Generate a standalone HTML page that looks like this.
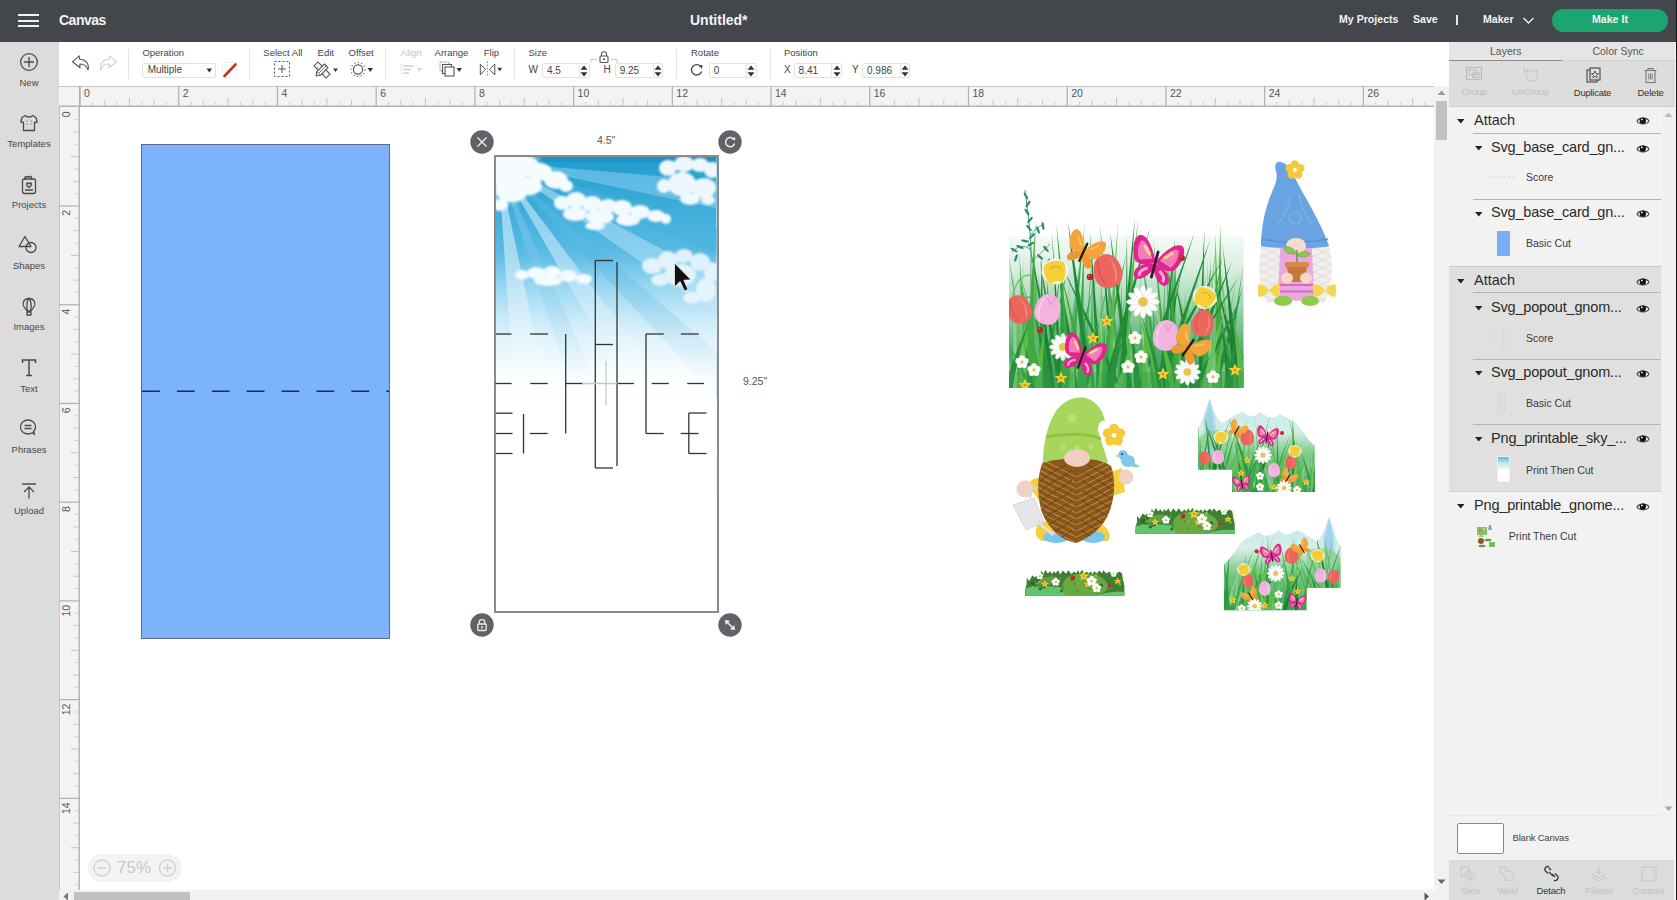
<!DOCTYPE html><html><head><meta charset="utf-8"><style>
*{margin:0;padding:0;box-sizing:border-box}
html,body{width:1677px;height:900px;overflow:hidden;background:#fff;font-family:"Liberation Sans",sans-serif;color:#333}
.a{position:absolute}
.t{position:absolute;white-space:nowrap;line-height:1}
svg text{font-family:"Liberation Sans",sans-serif}
</style></head><body><div class="a" style="left:0;top:0;width:1677px;height:42px;background:#43464b"></div><div class="a" style="left:18px;top:14px;width:21px;height:2px;background:#f2f2f2"></div><div class="a" style="left:18px;top:19.5px;width:21px;height:2px;background:#f2f2f2"></div><div class="a" style="left:18px;top:25px;width:21px;height:2px;background:#f2f2f2"></div><div class="t" style="left:59px;top:12.5px;font-size:14px;color:#f4f4f4;font-weight:bold;letter-spacing:-0.5px">Canvas</div><div class="t" style="left:690px;top:12.5px;font-size:14px;color:#f4f4f4;font-weight:bold">Untitled*</div><div class="t" style="left:1339px;top:14px;font-size:10.6px;color:#f4f4f4;font-weight:bold">My Projects</div><div class="t" style="left:1413px;top:14px;font-size:10.6px;color:#f4f4f4;font-weight:bold">Save</div><div class="a" style="left:1456px;top:15px;width:1.5px;height:10px;background:#e8e8e8"></div><div class="t" style="left:1483px;top:14px;font-size:10.6px;color:#f4f4f4;font-weight:bold">Maker</div><svg class="a" style="left:1522px;top:16px" width="13" height="9"><path d="M1.5 2 L6.5 7 L11.5 2" fill="none" stroke="#eee" stroke-width="1.4"/></svg><div class="a" style="left:1552px;top:9px;width:116px;height:23px;border-radius:12px;background:#1aa571"></div><div class="t" style="left:1592px;top:14px;font-size:10.6px;color:#f4f4f4;font-weight:bold">Make It</div>
<div class="a" style="left:0;top:42px;width:59px;height:858px;background:#dcdcdc"></div><svg class="a" style="left:18.6px;top:52.0px" width="20" height="20"><circle cx="10" cy="10" r="8.3" fill="none" stroke="#4a4a4a" stroke-width="1.3" stroke-linejoin="round" stroke-linecap="round"/><path d="M10 5.5V14.5M5.5 10H14.5" fill="none" stroke="#4a4a4a" stroke-width="1.3" stroke-linejoin="round" stroke-linecap="round"/></svg><div class="t" style="left:0;width:58px;text-align:center;top:78.0px;font-size:9.5px;color:#484848">New</div><svg class="a" style="left:18.5px;top:113.3px" width="20" height="20"><path d="M6.5 2.5 L3 4.5 L1.8 9 L4.5 9.5 L4.5 17.5 L15.5 17.5 L15.5 9.5 L18.2 9 L17 4.5 L13.5 2.5 C12.5 4.5 7.5 4.5 6.5 2.5Z" fill="none" stroke="#4a4a4a" stroke-width="1.3" stroke-linejoin="round" stroke-linecap="round"/><path d="M8 8h.1M12 8h.1M8 11h.1M12 11h.1" stroke="#4a4a4a" stroke-width="1.2" stroke-linecap="round"/></svg><div class="t" style="left:0;width:58px;text-align:center;top:139.1px;font-size:9.5px;color:#484848">Templates</div><svg class="a" style="left:19.0px;top:174.5px" width="20" height="20"><rect x="3.5" y="4" width="13" height="14.5" rx="2" fill="none" stroke="#4a4a4a" stroke-width="1.3" stroke-linejoin="round" stroke-linecap="round"/><path d="M6 4 L6 2 L12 1.5 L13 4" fill="none" stroke="#4a4a4a" stroke-width="1.3" stroke-linejoin="round" stroke-linecap="round"/><path d="M10 12.5 C7 10.5 7 8 8.5 8 C9.3 8 10 8.7 10 8.7 C10 8.7 10.7 8 11.5 8 C13 8 13 10.5 10 12.5Z" fill="none" stroke="#4a4a4a" stroke-width="1.3" stroke-linejoin="round" stroke-linecap="round"/><path d="M6.5 15H13.5" fill="none" stroke="#4a4a4a" stroke-width="1.3" stroke-linejoin="round" stroke-linecap="round"/></svg><div class="t" style="left:0;width:58px;text-align:center;top:200.2px;font-size:9.5px;color:#484848">Projects</div><svg class="a" style="left:17.5px;top:235.0px" width="20" height="20"><path d="M7 1.5 L1 11.5 L13 11.5Z" fill="none" stroke="#4a4a4a" stroke-width="1.3" stroke-linejoin="round" stroke-linecap="round"/><circle cx="13" cy="12.5" r="5" fill="none" stroke="#4a4a4a" stroke-width="1.3" stroke-linejoin="round" stroke-linecap="round"/></svg><div class="t" style="left:0;width:58px;text-align:center;top:261.3px;font-size:9.5px;color:#484848">Shapes</div><svg class="a" style="left:19.0px;top:297.0px" width="20" height="20"><path d="M10 1.5 C4.5 1.5 3.5 6 4.5 9 L8 14 L12 14 L15.5 9 C16.5 6 15.5 1.5 10 1.5Z" fill="none" stroke="#4a4a4a" stroke-width="1.3" stroke-linejoin="round" stroke-linecap="round"/><path d="M10 1.5 C7.5 3.5 7.5 11 8.5 14 M10 1.5 C12.5 3.5 12.5 11 11.5 14" fill="none" stroke="#4a4a4a" stroke-width="1.3" stroke-linejoin="round" stroke-linecap="round"/><rect x="8" y="15" width="4" height="3" fill="none" stroke="#4a4a4a" stroke-width="1.3" stroke-linejoin="round" stroke-linecap="round"/></svg><div class="t" style="left:0;width:58px;text-align:center;top:322.4px;font-size:9.5px;color:#484848">Images</div><svg class="a" style="left:18.6px;top:358.0px" width="20" height="20"><path d="M3.5 5 V2 H16.5 V5 M10 2 V17.5 M7 17.5 H13" fill="none" stroke="#4a4a4a" stroke-width="1.5"/></svg><div class="t" style="left:0;width:58px;text-align:center;top:383.5px;font-size:9.5px;color:#484848">Text</div><svg class="a" style="left:18.0px;top:418.3px" width="20" height="20"><path d="M16.5 16.5 L15.5 13.5 C17 12 17.5 10.5 17.5 9 C17.5 4.8 14.2 2 10 2 C5.8 2 2.5 4.8 2.5 9 C2.5 13.2 5.8 16 10 16 C11.8 16 13.3 15.5 14.5 14.8Z" fill="none" stroke="#4a4a4a" stroke-width="1.3" stroke-linejoin="round" stroke-linecap="round"/><path d="M6.5 7.5H13.5M6.5 10.5H13.5" fill="none" stroke="#4a4a4a" stroke-width="1.5"/></svg><div class="t" style="left:0;width:58px;text-align:center;top:444.6px;font-size:9.5px;color:#484848">Phrases</div><svg class="a" style="left:18.6px;top:480.5px" width="20" height="20"><path d="M3.5 3H16.5 M10 6 V17 M5.5 10.5 L10 6 L14.5 10.5" fill="none" stroke="#4a4a4a" stroke-width="1.3" stroke-linejoin="round" stroke-linecap="round"/></svg><div class="t" style="left:0;width:58px;text-align:center;top:505.7px;font-size:9.5px;color:#484848">Upload</div>
<div class="a" style="left:59px;top:42px;width:1390px;height:44px;background:#fff"></div><svg class="a" style="left:70px;top:54px" width="50" height="18"><path d="M2.5 7.8 L9.2 1.8 L9.6 5.2 C15.5 5.3 19.5 9.5 18 15.8 C16.2 11.5 13.5 9.8 9.8 10 L10 13.8 Z" fill="none" stroke="#555" stroke-width="1.1" stroke-linejoin="round"/><path d="M46.5 7.8 L39.8 1.8 L39.4 5.2 C33.5 5.3 29.5 9.5 31 15.8 C32.8 11.5 35.5 9.8 39.2 10 L39 13.8 Z" fill="none" stroke="#d0d0d0" stroke-width="1.1" stroke-linejoin="round"/></svg><div class="a" style="left:128.1px;top:49px;width:1px;height:30px;background:#e4e4e4"></div><div class="a" style="left:248.9px;top:49px;width:1px;height:30px;background:#e4e4e4"></div><div class="a" style="left:384.5px;top:49px;width:1px;height:30px;background:#e4e4e4"></div><div class="a" style="left:513.5px;top:49px;width:1px;height:30px;background:#e4e4e4"></div><div class="a" style="left:676.0px;top:49px;width:1px;height:30px;background:#e4e4e4"></div><div class="a" style="left:770.3px;top:49px;width:1px;height:30px;background:#e4e4e4"></div><div class="t" style="left:142.4px;top:48px;font-size:9.5px;color:#444;">Operation</div><div class="a" style="left:142.4px;top:62.5px;width:73.6px;height:15.2px;border:1px solid #e0e0e0;border-radius:2px"></div><div class="t" style="left:147.7px;top:64.5px;font-size:10px;color:#444;">Multiple</div><svg class="a" style="left:205.5px;top:67.5px" width="7" height="5"><path d="M0.5 0.5H6L3.25 4.5Z" fill="#333"/></svg><div class="a" style="left:221.5px;top:62px;width:15.2px;height:16px;border:1px solid #eee;border-radius:2px"></div><svg class="a" style="left:221.5px;top:62px" width="16" height="16"><path d="M2.5 14 L13.5 2.5" stroke="#b83a22" stroke-width="2.6" stroke-linecap="round"/></svg><div class="t" style="left:263.3px;top:48px;font-size:9.5px;color:#444;">Select All</div><svg class="a" style="left:273px;top:60px" width="18" height="18"><rect x="1.5" y="1.5" width="15" height="15" fill="none" stroke="#555" stroke-width="1" stroke-dasharray="2 2"/><path d="M9 5V13M5 9H13" stroke="#555" stroke-width="1"/></svg><div class="t" style="left:317.6px;top:48px;font-size:9.5px;color:#444;">Edit</div><svg class="a" style="left:313px;top:61px" width="26" height="18"><g transform="rotate(-45 9 9)"><rect x="6.3" y="0.5" width="5.4" height="17" fill="#fff" stroke="#555" stroke-width="1.1"/><path d="M6.3 4H8.5M6.3 7H8M6.3 10H8.5M6.3 13H8" stroke="#555" stroke-width="0.8"/></g><g transform="rotate(45 9 9)"><path d="M6.5 3 H11.5 V14 L9 17.5 L6.5 14Z" fill="#fff" stroke="#555" stroke-width="1.1" stroke-linejoin="round"/><path d="M9 3V14M6.5 14H11.5" stroke="#555" stroke-width="0.8"/></g><path d="M20 7.5H25L22.5 11Z" fill="#333"/></svg><div class="t" style="left:348.6px;top:48px;font-size:9.5px;color:#444;">Offset</div><svg class="a" style="left:350px;top:60px" width="24" height="19"><circle cx="8" cy="9.5" r="4.6" fill="none" stroke="#555" stroke-width="1.1"/><circle cx="8" cy="9.5" r="7" fill="none" stroke="#666" stroke-width="1.2" stroke-dasharray="1.2 2.4"/><path d="M17.5 8H23L20.2 12Z" fill="#333"/></svg><div class="t" style="left:400.6px;top:48px;font-size:9.5px;color:#c4c4c4;">Align</div><svg class="a" style="left:400px;top:61px" width="24" height="17"><path d="M1 3V15" stroke="#d4d4d4" stroke-width="1" stroke-dasharray="1.5 1.5"/><path d="M3 5H14M3 8.5H11M3 12H9" stroke="#cfcfcf" stroke-width="1.4"/><path d="M17 7H22L19.5 10.5Z" fill="#d0d0d0"/></svg><div class="t" style="left:434.6px;top:48px;font-size:9.5px;color:#444;">Arrange</div><svg class="a" style="left:438px;top:60px" width="26" height="19"><rect x="2" y="2" width="9" height="9" fill="none" stroke="#777" stroke-width="0.9" stroke-dasharray="1.3 1.2"/><rect x="4.5" y="4.5" width="9" height="9" fill="#fff" stroke="#555" stroke-width="1.1"/><rect x="7" y="7" width="9" height="9" fill="#fff" stroke="#555" stroke-width="1.1"/><path d="M18.5 8H24L21.2 12Z" fill="#333"/></svg><div class="t" style="left:483.8px;top:48px;font-size:9.5px;color:#444;">Flip</div><svg class="a" style="left:478px;top:60px" width="26" height="19"><path d="M2.3 4.2 L7.6 9.5 L2.3 14.8Z M16.8 4.2 L11.4 9.5 L16.8 14.8Z" fill="none" stroke="#555" stroke-width="1" stroke-linejoin="round"/><path d="M9.4 1.5V17" stroke="#7a8a98" stroke-width="1" stroke-dasharray="1.5 1.6"/><path d="M19.3 7.8H24.2L21.75 11.2Z" fill="#333"/></svg><div class="t" style="left:528.5px;top:48px;font-size:9.5px;color:#444;">Size</div><svg class="a" style="left:589px;top:48px" width="30" height="16"><path d="M2 15V11.5H8 M28 15V11.5H22" fill="none" stroke="#bbb" stroke-width="0.8"/><path d="M12.5 8V6 C12.5 3 17.5 3 17.5 6 V8" fill="none" stroke="#555" stroke-width="1.1"/><rect x="11" y="8" width="8" height="6.5" rx="1" fill="none" stroke="#555" stroke-width="1.1"/><circle cx="15" cy="11.2" r="1" fill="#555"/></svg><div class="t" style="left:528.5px;top:64.5px;font-size:10px;color:#444;">W</div><div class="a" style="left:542px;top:63px;width:48px;height:14.5px;border:1px solid #e2e2e2;border-radius:2px;background:#fff"></div><div class="a" style="left:578.6px;top:63px;width:1px;height:14.5px;background:#e6e6e6"></div><svg class="a" style="left:580.3px;top:65px" width="8" height="12"><path d="M4 0.5 L7.5 4.8 L0.5 4.8Z M4 11.5 L7.5 7.2 L0.5 7.2Z" fill="#333"/></svg><div class="t" style="left:547px;top:65.5px;font-size:10px;color:#444;">4.5</div><div class="t" style="left:603.6px;top:64.5px;font-size:10px;color:#444;">H</div><div class="a" style="left:614.7px;top:63px;width:48.799999999999955px;height:14.5px;border:1px solid #e2e2e2;border-radius:2px;background:#fff"></div><div class="a" style="left:652.8px;top:63px;width:1px;height:14.5px;background:#e6e6e6"></div><svg class="a" style="left:654.1px;top:65px" width="8" height="12"><path d="M4 0.5 L7.5 4.8 L0.5 4.8Z M4 11.5 L7.5 7.2 L0.5 7.2Z" fill="#333"/></svg><div class="t" style="left:619.7px;top:65.5px;font-size:10px;color:#444;">9.25</div><div class="t" style="left:691px;top:48px;font-size:9.5px;color:#444;">Rotate</div><svg class="a" style="left:689px;top:62px" width="16" height="15"><path d="M11.5 4.2 A5.2 5.2 0 1 0 12.6 9.5" fill="none" stroke="#444" stroke-width="1.3"/><path d="M9.5 3.5 L13.5 3 L13 7Z" fill="#444"/></svg><div class="a" style="left:708.8px;top:63px;width:48.0px;height:14.5px;border:1px solid #e2e2e2;border-radius:2px;background:#fff"></div><div class="a" style="left:745.7px;top:63px;width:1px;height:14.5px;background:#e6e6e6"></div><svg class="a" style="left:747.2px;top:65px" width="8" height="12"><path d="M4 0.5 L7.5 4.8 L0.5 4.8Z M4 11.5 L7.5 7.2 L0.5 7.2Z" fill="#333"/></svg><div class="t" style="left:713.8px;top:65.5px;font-size:10px;color:#444;">0</div><div class="t" style="left:784px;top:48px;font-size:9.5px;color:#444;">Position</div><div class="t" style="left:784px;top:64.5px;font-size:10px;color:#444;">X</div><div class="a" style="left:793.6px;top:63px;width:48.39999999999998px;height:14.5px;border:1px solid #e2e2e2;border-radius:2px;background:#fff"></div><div class="a" style="left:831px;top:63px;width:1px;height:14.5px;background:#e6e6e6"></div><svg class="a" style="left:832.5px;top:65px" width="8" height="12"><path d="M4 0.5 L7.5 4.8 L0.5 4.8Z M4 11.5 L7.5 7.2 L0.5 7.2Z" fill="#333"/></svg><div class="t" style="left:798.6px;top:65.5px;font-size:10px;color:#444;">8.41</div><div class="t" style="left:852px;top:64.5px;font-size:10px;color:#444;">Y</div><div class="a" style="left:862px;top:63px;width:48px;height:14.5px;border:1px solid #e2e2e2;border-radius:2px;background:#fff"></div><div class="a" style="left:899.5px;top:63px;width:1px;height:14.5px;background:#e6e6e6"></div><svg class="a" style="left:900.8px;top:65px" width="8" height="12"><path d="M4 0.5 L7.5 4.8 L0.5 4.8Z M4 11.5 L7.5 7.2 L0.5 7.2Z" fill="#333"/></svg><div class="t" style="left:867px;top:65.5px;font-size:10px;color:#444;">0.986</div>
<svg style="position:absolute;left:59px;top:86px" width="1375" height="21"><rect x="0" y="0" width="1375" height="21" fill="#f3f3f3"/><rect x="0" y="0" width="1375" height="1" fill="#c4c4c4"/><rect x="0" y="19.5" width="1375" height="1.5" fill="#b4b4b4"/><rect x="20" y="0" width="1.3" height="21" fill="#a9a9a9"/><rect x="20.40" y="0" width="1.2" height="21" fill="#b0b0b0"/><text x="25.00" y="11.3" font-size="10.5" fill="#555">0</text><rect x="32.84" y="16" width="1" height="4" fill="#cccccc"/><rect x="45.18" y="14" width="1" height="6" fill="#c8c8c8"/><rect x="57.52" y="16" width="1" height="4" fill="#cccccc"/><rect x="69.86" y="12" width="1" height="8" fill="#c2c2c2"/><rect x="82.20" y="16" width="1" height="4" fill="#cccccc"/><rect x="94.54" y="14" width="1" height="6" fill="#c8c8c8"/><rect x="106.88" y="16" width="1" height="4" fill="#cccccc"/><rect x="119.12" y="0" width="1.2" height="21" fill="#b0b0b0"/><text x="123.72" y="11.3" font-size="10.5" fill="#555">2</text><rect x="131.56" y="16" width="1" height="4" fill="#cccccc"/><rect x="143.90" y="14" width="1" height="6" fill="#c8c8c8"/><rect x="156.24" y="16" width="1" height="4" fill="#cccccc"/><rect x="168.58" y="12" width="1" height="8" fill="#c2c2c2"/><rect x="180.92" y="16" width="1" height="4" fill="#cccccc"/><rect x="193.26" y="14" width="1" height="6" fill="#c8c8c8"/><rect x="205.60" y="16" width="1" height="4" fill="#cccccc"/><rect x="217.84" y="0" width="1.2" height="21" fill="#b0b0b0"/><text x="222.44" y="11.3" font-size="10.5" fill="#555">4</text><rect x="230.28" y="16" width="1" height="4" fill="#cccccc"/><rect x="242.62" y="14" width="1" height="6" fill="#c8c8c8"/><rect x="254.96" y="16" width="1" height="4" fill="#cccccc"/><rect x="267.30" y="12" width="1" height="8" fill="#c2c2c2"/><rect x="279.64" y="16" width="1" height="4" fill="#cccccc"/><rect x="291.98" y="14" width="1" height="6" fill="#c8c8c8"/><rect x="304.32" y="16" width="1" height="4" fill="#cccccc"/><rect x="316.56" y="0" width="1.2" height="21" fill="#b0b0b0"/><text x="321.16" y="11.3" font-size="10.5" fill="#555">6</text><rect x="329.00" y="16" width="1" height="4" fill="#cccccc"/><rect x="341.34" y="14" width="1" height="6" fill="#c8c8c8"/><rect x="353.68" y="16" width="1" height="4" fill="#cccccc"/><rect x="366.02" y="12" width="1" height="8" fill="#c2c2c2"/><rect x="378.36" y="16" width="1" height="4" fill="#cccccc"/><rect x="390.70" y="14" width="1" height="6" fill="#c8c8c8"/><rect x="403.04" y="16" width="1" height="4" fill="#cccccc"/><rect x="415.28" y="0" width="1.2" height="21" fill="#b0b0b0"/><text x="419.88" y="11.3" font-size="10.5" fill="#555">8</text><rect x="427.72" y="16" width="1" height="4" fill="#cccccc"/><rect x="440.06" y="14" width="1" height="6" fill="#c8c8c8"/><rect x="452.40" y="16" width="1" height="4" fill="#cccccc"/><rect x="464.74" y="12" width="1" height="8" fill="#c2c2c2"/><rect x="477.08" y="16" width="1" height="4" fill="#cccccc"/><rect x="489.42" y="14" width="1" height="6" fill="#c8c8c8"/><rect x="501.76" y="16" width="1" height="4" fill="#cccccc"/><rect x="514.00" y="0" width="1.2" height="21" fill="#b0b0b0"/><text x="518.60" y="11.3" font-size="10.5" fill="#555">10</text><rect x="526.44" y="16" width="1" height="4" fill="#cccccc"/><rect x="538.78" y="14" width="1" height="6" fill="#c8c8c8"/><rect x="551.12" y="16" width="1" height="4" fill="#cccccc"/><rect x="563.46" y="12" width="1" height="8" fill="#c2c2c2"/><rect x="575.80" y="16" width="1" height="4" fill="#cccccc"/><rect x="588.14" y="14" width="1" height="6" fill="#c8c8c8"/><rect x="600.48" y="16" width="1" height="4" fill="#cccccc"/><rect x="612.72" y="0" width="1.2" height="21" fill="#b0b0b0"/><text x="617.32" y="11.3" font-size="10.5" fill="#555">12</text><rect x="625.16" y="16" width="1" height="4" fill="#cccccc"/><rect x="637.50" y="14" width="1" height="6" fill="#c8c8c8"/><rect x="649.84" y="16" width="1" height="4" fill="#cccccc"/><rect x="662.18" y="12" width="1" height="8" fill="#c2c2c2"/><rect x="674.52" y="16" width="1" height="4" fill="#cccccc"/><rect x="686.86" y="14" width="1" height="6" fill="#c8c8c8"/><rect x="699.20" y="16" width="1" height="4" fill="#cccccc"/><rect x="711.44" y="0" width="1.2" height="21" fill="#b0b0b0"/><text x="716.04" y="11.3" font-size="10.5" fill="#555">14</text><rect x="723.88" y="16" width="1" height="4" fill="#cccccc"/><rect x="736.22" y="14" width="1" height="6" fill="#c8c8c8"/><rect x="748.56" y="16" width="1" height="4" fill="#cccccc"/><rect x="760.90" y="12" width="1" height="8" fill="#c2c2c2"/><rect x="773.24" y="16" width="1" height="4" fill="#cccccc"/><rect x="785.58" y="14" width="1" height="6" fill="#c8c8c8"/><rect x="797.92" y="16" width="1" height="4" fill="#cccccc"/><rect x="810.16" y="0" width="1.2" height="21" fill="#b0b0b0"/><text x="814.76" y="11.3" font-size="10.5" fill="#555">16</text><rect x="822.60" y="16" width="1" height="4" fill="#cccccc"/><rect x="834.94" y="14" width="1" height="6" fill="#c8c8c8"/><rect x="847.28" y="16" width="1" height="4" fill="#cccccc"/><rect x="859.62" y="12" width="1" height="8" fill="#c2c2c2"/><rect x="871.96" y="16" width="1" height="4" fill="#cccccc"/><rect x="884.30" y="14" width="1" height="6" fill="#c8c8c8"/><rect x="896.64" y="16" width="1" height="4" fill="#cccccc"/><rect x="908.88" y="0" width="1.2" height="21" fill="#b0b0b0"/><text x="913.48" y="11.3" font-size="10.5" fill="#555">18</text><rect x="921.32" y="16" width="1" height="4" fill="#cccccc"/><rect x="933.66" y="14" width="1" height="6" fill="#c8c8c8"/><rect x="946.00" y="16" width="1" height="4" fill="#cccccc"/><rect x="958.34" y="12" width="1" height="8" fill="#c2c2c2"/><rect x="970.68" y="16" width="1" height="4" fill="#cccccc"/><rect x="983.02" y="14" width="1" height="6" fill="#c8c8c8"/><rect x="995.36" y="16" width="1" height="4" fill="#cccccc"/><rect x="1007.60" y="0" width="1.2" height="21" fill="#b0b0b0"/><text x="1012.20" y="11.3" font-size="10.5" fill="#555">20</text><rect x="1020.04" y="16" width="1" height="4" fill="#cccccc"/><rect x="1032.38" y="14" width="1" height="6" fill="#c8c8c8"/><rect x="1044.72" y="16" width="1" height="4" fill="#cccccc"/><rect x="1057.06" y="12" width="1" height="8" fill="#c2c2c2"/><rect x="1069.40" y="16" width="1" height="4" fill="#cccccc"/><rect x="1081.74" y="14" width="1" height="6" fill="#c8c8c8"/><rect x="1094.08" y="16" width="1" height="4" fill="#cccccc"/><rect x="1106.32" y="0" width="1.2" height="21" fill="#b0b0b0"/><text x="1110.92" y="11.3" font-size="10.5" fill="#555">22</text><rect x="1118.76" y="16" width="1" height="4" fill="#cccccc"/><rect x="1131.10" y="14" width="1" height="6" fill="#c8c8c8"/><rect x="1143.44" y="16" width="1" height="4" fill="#cccccc"/><rect x="1155.78" y="12" width="1" height="8" fill="#c2c2c2"/><rect x="1168.12" y="16" width="1" height="4" fill="#cccccc"/><rect x="1180.46" y="14" width="1" height="6" fill="#c8c8c8"/><rect x="1192.80" y="16" width="1" height="4" fill="#cccccc"/><rect x="1205.04" y="0" width="1.2" height="21" fill="#b0b0b0"/><text x="1209.64" y="11.3" font-size="10.5" fill="#555">24</text><rect x="1217.48" y="16" width="1" height="4" fill="#cccccc"/><rect x="1229.82" y="14" width="1" height="6" fill="#c8c8c8"/><rect x="1242.16" y="16" width="1" height="4" fill="#cccccc"/><rect x="1254.50" y="12" width="1" height="8" fill="#c2c2c2"/><rect x="1266.84" y="16" width="1" height="4" fill="#cccccc"/><rect x="1279.18" y="14" width="1" height="6" fill="#c8c8c8"/><rect x="1291.52" y="16" width="1" height="4" fill="#cccccc"/><rect x="1303.76" y="0" width="1.2" height="21" fill="#b0b0b0"/><text x="1308.36" y="11.3" font-size="10.5" fill="#555">26</text><rect x="1316.20" y="16" width="1" height="4" fill="#cccccc"/><rect x="1328.54" y="14" width="1" height="6" fill="#c8c8c8"/><rect x="1340.88" y="16" width="1" height="4" fill="#cccccc"/><rect x="1353.22" y="12" width="1" height="8" fill="#c2c2c2"/><rect x="1365.56" y="16" width="1" height="4" fill="#cccccc"/></svg>
<svg style="position:absolute;left:59px;top:107px" width="21" height="783"><rect x="0" y="0" width="21" height="783" fill="#f3f3f3"/><rect x="19.6" y="0" width="1.4" height="783" fill="#b4b4b4"/><rect x="0" y="0" width="1" height="783" fill="#c4c4c4"/><text transform="translate(11.3,4.30) rotate(-90)" text-anchor="end" font-size="10.5" fill="#555">0</text><rect x="16" y="12.14" width="4" height="1" fill="#cccccc"/><rect x="14" y="24.48" width="6" height="1" fill="#c8c8c8"/><rect x="16" y="36.82" width="4" height="1" fill="#cccccc"/><rect x="12" y="49.16" width="8" height="1" fill="#c2c2c2"/><rect x="16" y="61.50" width="4" height="1" fill="#cccccc"/><rect x="14" y="73.84" width="6" height="1" fill="#c8c8c8"/><rect x="16" y="86.18" width="4" height="1" fill="#cccccc"/><rect x="0" y="98.42" width="21" height="1.2" fill="#b0b0b0"/><text transform="translate(11.3,103.02) rotate(-90)" text-anchor="end" font-size="10.5" fill="#555">2</text><rect x="16" y="110.86" width="4" height="1" fill="#cccccc"/><rect x="14" y="123.20" width="6" height="1" fill="#c8c8c8"/><rect x="16" y="135.54" width="4" height="1" fill="#cccccc"/><rect x="12" y="147.88" width="8" height="1" fill="#c2c2c2"/><rect x="16" y="160.22" width="4" height="1" fill="#cccccc"/><rect x="14" y="172.56" width="6" height="1" fill="#c8c8c8"/><rect x="16" y="184.90" width="4" height="1" fill="#cccccc"/><rect x="0" y="197.14" width="21" height="1.2" fill="#b0b0b0"/><text transform="translate(11.3,201.74) rotate(-90)" text-anchor="end" font-size="10.5" fill="#555">4</text><rect x="16" y="209.58" width="4" height="1" fill="#cccccc"/><rect x="14" y="221.92" width="6" height="1" fill="#c8c8c8"/><rect x="16" y="234.26" width="4" height="1" fill="#cccccc"/><rect x="12" y="246.60" width="8" height="1" fill="#c2c2c2"/><rect x="16" y="258.94" width="4" height="1" fill="#cccccc"/><rect x="14" y="271.28" width="6" height="1" fill="#c8c8c8"/><rect x="16" y="283.62" width="4" height="1" fill="#cccccc"/><rect x="0" y="295.86" width="21" height="1.2" fill="#b0b0b0"/><text transform="translate(11.3,300.46) rotate(-90)" text-anchor="end" font-size="10.5" fill="#555">6</text><rect x="16" y="308.30" width="4" height="1" fill="#cccccc"/><rect x="14" y="320.64" width="6" height="1" fill="#c8c8c8"/><rect x="16" y="332.98" width="4" height="1" fill="#cccccc"/><rect x="12" y="345.32" width="8" height="1" fill="#c2c2c2"/><rect x="16" y="357.66" width="4" height="1" fill="#cccccc"/><rect x="14" y="370.00" width="6" height="1" fill="#c8c8c8"/><rect x="16" y="382.34" width="4" height="1" fill="#cccccc"/><rect x="0" y="394.58" width="21" height="1.2" fill="#b0b0b0"/><text transform="translate(11.3,399.18) rotate(-90)" text-anchor="end" font-size="10.5" fill="#555">8</text><rect x="16" y="407.02" width="4" height="1" fill="#cccccc"/><rect x="14" y="419.36" width="6" height="1" fill="#c8c8c8"/><rect x="16" y="431.70" width="4" height="1" fill="#cccccc"/><rect x="12" y="444.04" width="8" height="1" fill="#c2c2c2"/><rect x="16" y="456.38" width="4" height="1" fill="#cccccc"/><rect x="14" y="468.72" width="6" height="1" fill="#c8c8c8"/><rect x="16" y="481.06" width="4" height="1" fill="#cccccc"/><rect x="0" y="493.30" width="21" height="1.2" fill="#b0b0b0"/><text transform="translate(11.3,497.90) rotate(-90)" text-anchor="end" font-size="10.5" fill="#555">10</text><rect x="16" y="505.74" width="4" height="1" fill="#cccccc"/><rect x="14" y="518.08" width="6" height="1" fill="#c8c8c8"/><rect x="16" y="530.42" width="4" height="1" fill="#cccccc"/><rect x="12" y="542.76" width="8" height="1" fill="#c2c2c2"/><rect x="16" y="555.10" width="4" height="1" fill="#cccccc"/><rect x="14" y="567.44" width="6" height="1" fill="#c8c8c8"/><rect x="16" y="579.78" width="4" height="1" fill="#cccccc"/><rect x="0" y="592.02" width="21" height="1.2" fill="#b0b0b0"/><text transform="translate(11.3,596.62) rotate(-90)" text-anchor="end" font-size="10.5" fill="#555">12</text><rect x="16" y="604.46" width="4" height="1" fill="#cccccc"/><rect x="14" y="616.80" width="6" height="1" fill="#c8c8c8"/><rect x="16" y="629.14" width="4" height="1" fill="#cccccc"/><rect x="12" y="641.48" width="8" height="1" fill="#c2c2c2"/><rect x="16" y="653.82" width="4" height="1" fill="#cccccc"/><rect x="14" y="666.16" width="6" height="1" fill="#c8c8c8"/><rect x="16" y="678.50" width="4" height="1" fill="#cccccc"/><rect x="0" y="690.74" width="21" height="1.2" fill="#b0b0b0"/><text transform="translate(11.3,695.34) rotate(-90)" text-anchor="end" font-size="10.5" fill="#555">14</text><rect x="16" y="703.18" width="4" height="1" fill="#cccccc"/><rect x="14" y="715.52" width="6" height="1" fill="#c8c8c8"/><rect x="16" y="727.86" width="4" height="1" fill="#cccccc"/><rect x="12" y="740.20" width="8" height="1" fill="#c2c2c2"/><rect x="16" y="752.54" width="4" height="1" fill="#cccccc"/><rect x="14" y="764.88" width="6" height="1" fill="#c8c8c8"/><rect x="16" y="777.22" width="4" height="1" fill="#cccccc"/></svg>
<div class="a" style="left:141px;top:144px;width:248.5px;height:495px;background:#7db3fb;border:1.6px solid #5d6c86"></div><svg class="a" style="left:141px;top:389px" width="249" height="5"><path d="M1 2.3H248" stroke="#0d2f66" stroke-width="1.6" stroke-dasharray="17.8 17.1"/></svg><div class="a" style="left:494px;top:154.5px;width:224.5px;height:458.5px;background:#fff;border:2.2px solid #8a8a8a"></div><svg class="a" style="left:0;top:0" width="1434" height="890">
<defs>
 <linearGradient id="meadowBg" x1="0" y1="0" x2="0" y2="1">
  <stop offset="0" stop-color="#f4faf6"/>
  <stop offset="0.2" stop-color="#dcefe3"/>
  <stop offset="0.45" stop-color="#a3d6b3"/>
  <stop offset="0.75" stop-color="#4fae6e"/>
  <stop offset="1" stop-color="#2a9950"/>
 </linearGradient>
 <linearGradient id="skyG" x1="0" y1="0" x2="0" y2="1">
  <stop offset="0" stop-color="#1f9ccb"/>
  <stop offset="0.35" stop-color="#3fb0df"/>
  <stop offset="0.6" stop-color="#7fcdef"/>
  <stop offset="1" stop-color="#bfe6f7"/>
 </linearGradient>
 <linearGradient id="skyFade" x1="0" y1="0" x2="0" y2="1">
  <stop offset="0" stop-color="#fff" stop-opacity="0"/>
  <stop offset="0.4" stop-color="#fff" stop-opacity="0.12"/>
  <stop offset="0.6" stop-color="#fff" stop-opacity="0.45"/>
  <stop offset="0.72" stop-color="#fff" stop-opacity="0.7"/>
  <stop offset="0.88" stop-color="#fff" stop-opacity="0.95"/>
  <stop offset="1" stop-color="#fff" stop-opacity="1"/>
 </linearGradient>
 <filter id="soft" x="-20%" y="-20%" width="140%" height="140%"><feGaussianBlur stdDeviation="1.3"/></filter>
 <radialGradient id="sunG" cx="0.5" cy="0.5" r="0.5">
  <stop offset="0" stop-color="#fff" stop-opacity="1"/>
  <stop offset="0.5" stop-color="#fff" stop-opacity="0.8"/>
  <stop offset="1" stop-color="#fff" stop-opacity="0"/>
 </radialGradient>
 <linearGradient id="patchTop" x1="0" y1="0" x2="0" y2="1">
  <stop offset="0" stop-color="#bfe6f2"/>
  <stop offset="0.35" stop-color="#d6efe6"/>
  <stop offset="0.6" stop-color="#7cc98a"/>
  <stop offset="1" stop-color="#2e9f4f"/>
 </linearGradient>
 <g id="tulipR"><path d="M0 -10 C6.5 -10 9 -3 8.5 3 C8 8.5 4 10.5 0 10.5 C-4 10.5 -8 8.5 -8.5 3 C-9 -3 -6.5 -10 0 -10Z" fill="#ec665e"/><path d="M1 -9 C5 -6 5 4 2 9 C6 6 7 -4 1 -9Z" fill="#f58d80"/><path d="M-4 -8 C-6 -2 -5 5 -3 8" fill="none" stroke="#d9524c" stroke-width="0.8"/></g>
 <g id="tulipP"><path d="M0 -10 C6.5 -10 9 -3 8.5 3 C8 8.5 4 10.5 0 10.5 C-4 10.5 -8 8.5 -8.5 3 C-9 -3 -6.5 -10 0 -10Z" fill="#f2b3df"/><path d="M-2 -9 C-6 -5 -6 4 -3 9 C-7 6 -8 -4 -2 -9Z" fill="#fad6ee"/><path d="M3 -8 L1 -3 L-2 -7" fill="none" stroke="#e597cc" stroke-width="0.8"/></g>
 <g id="daisy">
  <g fill="#fff" stroke="#dcdcdc" stroke-width="0.4">
   <ellipse cx="0" cy="-6" rx="2" ry="5"/><ellipse cx="0" cy="-6" rx="2" ry="5" transform="rotate(30)"/><ellipse cx="0" cy="-6" rx="2" ry="5" transform="rotate(60)"/>
   <ellipse cx="0" cy="-6" rx="2" ry="5" transform="rotate(90)"/><ellipse cx="0" cy="-6" rx="2" ry="5" transform="rotate(120)"/><ellipse cx="0" cy="-6" rx="2" ry="5" transform="rotate(150)"/>
   <ellipse cx="0" cy="-6" rx="2" ry="5" transform="rotate(180)"/><ellipse cx="0" cy="-6" rx="2" ry="5" transform="rotate(210)"/><ellipse cx="0" cy="-6" rx="2" ry="5" transform="rotate(240)"/>
   <ellipse cx="0" cy="-6" rx="2" ry="5" transform="rotate(270)"/><ellipse cx="0" cy="-6" rx="2" ry="5" transform="rotate(300)"/><ellipse cx="0" cy="-6" rx="2" ry="5" transform="rotate(330)"/>
  </g>
  <circle r="3.2" fill="#e8c44a"/>
 </g>
 <g id="bfly">
  <path d="M0 -1 C-3 -7 -7 -13 -11 -12 C-14 -10 -13 -3 -10 1 C-7 3 -3 2 0 -1Z" fill="#e1258e"/>
  <path d="M0 -1 C3 -7 7 -13 11 -12 C14 -10 13 -3 10 1 C7 3 3 2 0 -1Z" fill="#e1258e"/>
  <path d="M0 0 C-4 1 -9 3 -9 7 C-9 11 -4 11 0 3Z" fill="#e1258e"/>
  <path d="M0 0 C4 1 9 3 9 7 C9 11 4 11 0 3Z" fill="#e1258e"/>
  <path d="M-2 -2 C-4 -6 -7 -10 -9.5 -9.5 C-11 -7 -10 -2 -8 0Z" fill="#f47cbc"/>
  <path d="M2 -2 C4 -6 7 -10 9.5 -9.5 C11 -7 10 -2 8 0Z" fill="#f47cbc"/>
  <path d="M-4 -4 L-7 -7 M4 -4 L7 -7" stroke="#f9d08c" stroke-width="1.6" stroke-linecap="round"/>
  <path d="M-3 3 C-5 4 -7 6 -6 8 M3 3 C5 4 7 6 6 8" fill="none" stroke="#f7a9d2" stroke-width="1.4"/>
  <path d="M0 -6V7" stroke="#4a1035" stroke-width="1.4" stroke-linecap="round"/>
 </g>
 <g id="bflyO">
  <path d="M0 -1 C-3 -7 -7 -13 -11 -12 C-14 -10 -13 -3 -10 1 C-7 3 -3 2 0 -1Z" fill="#f4a43a"/>
  <path d="M0 -1 C3 -7 7 -13 11 -12 C14 -10 13 -3 10 1 C7 3 3 2 0 -1Z" fill="#f4a43a"/>
  <path d="M0 0 C-4 1 -9 3 -9 7 C-9 11 -4 11 0 3Z" fill="#f0982e"/>
  <path d="M0 0 C4 1 9 3 9 7 C9 11 4 11 0 3Z" fill="#f0982e"/>
  <path d="M-3 -3 L-8 -8 M3 -3 L8 -8" stroke="#f8c46a" stroke-width="1.2"/>
  <path d="M0 -6V7" stroke="#2a1a08" stroke-width="1.6" stroke-linecap="round"/>
 </g>
 <g id="daff"><path d="M0 -8 C4 -8 8 -5 9 0 C8 5 5 8 0 9 C-5 8 -8 5 -9 0 C-8 -5 -4 -8 0 -8Z" fill="#f7f7f2" opacity="0.9"/><path d="M-6 -5 C-2 -7 3 -7 7 -4 C8 0 6 5 3 8 C0 6 -3 6 -5 8 C-7 4 -8 -1 -6 -5Z" fill="#f5cf35"/><path d="M-3 -2 C0 -4 3 -3 4 0" fill="none" stroke="#e3b521" stroke-width="0.9"/></g>
 <g id="star"><path d="M0 -5 L1.5 -1.5 L5 -1.5 L2.3 1 L3.2 4.5 L0 2.5 L-3.2 4.5 L-2.3 1 L-5 -1.5 L-1.5 -1.5Z" fill="#f6d02f"/><circle r="1.2" fill="#e5902a"/></g>
 <g id="wfl"><circle cx="0" cy="-3" r="2.2" fill="#fff"/><circle cx="2.9" cy="-0.9" r="2.2" fill="#fff"/><circle cx="1.8" cy="2.4" r="2.2" fill="#fff"/><circle cx="-1.8" cy="2.4" r="2.2" fill="#fff"/><circle cx="-2.9" cy="-0.9" r="2.2" fill="#fff"/><circle r="1.3" fill="#e8c44a"/></g>
 <g id="bug"><circle r="3" fill="#b3262a"/><circle cx="-1" cy="-1" r="0.8" fill="#e86a6a"/></g>
</defs>
<clipPath id="skyclip"><rect x="496" y="157" width="220.5" height="454"/></clipPath><g clip-path="url(#skyclip)"><rect x="496" y="157" width="221" height="250" fill="url(#skyG)"/><path d="M498 162 L889.3 78.8 L898.0 162.0Z" fill="#1592c2" opacity="0.75"/><path d="M498 162 L896.5 196.9 L889.3 245.2Z" fill="#6cc0e8" opacity="0.75"/><path d="M498 162 L880.5 278.9 L866.2 318.3Z" fill="#3aa9dc" opacity="0.75"/><path d="M498 162 L851.2 349.8 L825.7 391.4Z" fill="#8fd2f1" opacity="0.75"/><path d="M498 162 L799.9 424.4 L770.8 454.5Z" fill="#45b0e0" opacity="0.75"/><path d="M498 162 L738.7 481.5 L698.0 508.4Z" fill="#a8ddf5" opacity="0.75"/><path d="M498 162 L660.7 527.4 L621.6 542.4Z" fill="#5dbbe6" opacity="0.75"/><path d="M498 162 L581.2 553.3 L525.9 561.0Z" fill="#b6e2f6" opacity="0.75"/><rect x="496" y="157" width="221" height="250" fill="url(#skyFade)"/><rect x="496" y="397" width="221" height="240" fill="#fff"/><circle cx="505" cy="168" r="40" fill="url(#sunG)"/><g fill="#f6fcfe" opacity="1" filter="url(#soft)"><ellipse cx="506" cy="168" rx="22" ry="18"/><ellipse cx="525" cy="166" rx="14" ry="10"/><ellipse cx="540" cy="172" rx="12" ry="9"/><ellipse cx="556" cy="180" rx="12" ry="9"/><ellipse cx="566" cy="186" rx="7" ry="6"/><ellipse cx="512" cy="190" rx="16" ry="12"/><ellipse cx="530" cy="186" rx="12" ry="9"/><ellipse cx="500" cy="205" rx="8" ry="6"/></g><g fill="#f3fafd" opacity="1" filter="url(#soft)"><ellipse cx="562" cy="203" rx="8" ry="7"/><ellipse cx="576" cy="200" rx="10" ry="8"/><ellipse cx="592" cy="204" rx="10" ry="8"/><ellipse cx="608" cy="206" rx="9" ry="7"/><ellipse cx="622" cy="208" rx="10" ry="8"/><ellipse cx="640" cy="212" rx="10" ry="7"/><ellipse cx="656" cy="216" rx="9" ry="6"/><ellipse cx="666" cy="219" rx="5" ry="5"/><ellipse cx="575" cy="214" rx="12" ry="7"/><ellipse cx="600" cy="217" rx="14" ry="7"/><ellipse cx="628" cy="220" rx="12" ry="6"/><ellipse cx="595" cy="226" rx="10" ry="4"/></g><g fill="#eef8fc" opacity="1" filter="url(#soft)"><ellipse cx="668" cy="168" rx="9" ry="8"/><ellipse cx="684" cy="164" rx="10" ry="8"/><ellipse cx="700" cy="165" rx="9" ry="7"/><ellipse cx="712" cy="170" rx="8" ry="8"/><ellipse cx="664" cy="186" rx="7" ry="7"/><ellipse cx="682" cy="184" rx="14" ry="12"/><ellipse cx="704" cy="188" rx="12" ry="10"/><ellipse cx="690" cy="199" rx="10" ry="6"/><ellipse cx="708" cy="200" rx="7" ry="5"/></g><g fill="#f4fbfe" opacity="1" filter="url(#soft)"><ellipse cx="522" cy="275" rx="7" ry="5"/><ellipse cx="536" cy="273" rx="9" ry="6"/><ellipse cx="552" cy="272" rx="9" ry="6"/><ellipse cx="568" cy="276" rx="9" ry="6"/><ellipse cx="584" cy="279" rx="8" ry="5"/><ellipse cx="548" cy="281" rx="14" ry="5"/></g><g fill="#e6f5fb" opacity="0.95" filter="url(#soft)"><ellipse cx="652" cy="266" rx="10" ry="8"/><ellipse cx="668" cy="260" rx="10" ry="9"/><ellipse cx="684" cy="256" rx="9" ry="7"/><ellipse cx="700" cy="262" rx="10" ry="9"/><ellipse cx="712" cy="272" rx="8" ry="10"/><ellipse cx="680" cy="275" rx="16" ry="11"/><ellipse cx="706" cy="290" rx="10" ry="12"/><ellipse cx="692" cy="298" rx="9" ry="6"/><ellipse cx="660" cy="280" rx="9" ry="6"/></g></g><path d="M674.5 263 L674.5 287 L680 281.5 L684.5 291 L688 289.5 L683.8 280.2 L691 279.8Z" fill="#111" stroke="#fff" stroke-width="0.7"/></svg><svg class="a" style="left:0;top:0" width="1434" height="890"><path d="M496 334H511.5" stroke="#333" stroke-width="1.3"/><path d="M530 334H548" stroke="#333" stroke-width="1.3"/><path d="M646 334H663.7" stroke="#333" stroke-width="1.3"/><path d="M680.8 334H698.8" stroke="#333" stroke-width="1.3"/><path d="M595.3 260.5V468" stroke="#333" stroke-width="1.3"/><path d="M617 262V466" stroke="#333" stroke-width="1.3"/><path d="M595.3 260.5H613" stroke="#333" stroke-width="1.3"/><path d="M595.3 344.5H613" stroke="#333" stroke-width="1.3"/><path d="M595.3 468H613" stroke="#333" stroke-width="1.3"/><path d="M565.7 334V433.5" stroke="#333" stroke-width="1.3"/><path d="M646 334V433.5" stroke="#333" stroke-width="1.3"/><path d="M646 433.5H663.7" stroke="#333" stroke-width="1.3"/><path d="M495.5 383.5H511.6" stroke="#333" stroke-width="1.3"/><path d="M530.3 383.5H547.7" stroke="#333" stroke-width="1.3"/><path d="M565.7 383.5H582.5" stroke="#333" stroke-width="1.3"/><path d="M618 383.5H634" stroke="#333" stroke-width="1.3"/><path d="M651.7 383.5H668.8" stroke="#333" stroke-width="1.3"/><path d="M687.2 383.5H704" stroke="#333" stroke-width="1.3"/><path d="M582.5 383.5H617" stroke="#c8c8c8" stroke-width="1.3"/><path d="M606 361V405" stroke="#c8c8c8" stroke-width="1.3"/><path d="M496 413.2H512.5" stroke="#333" stroke-width="1.3"/><path d="M496 433.5H512.5" stroke="#333" stroke-width="1.3"/><path d="M496 453.5H512.5" stroke="#333" stroke-width="1.3"/><path d="M523.5 414V453.5" stroke="#333" stroke-width="1.3"/><path d="M530 433.5H547.7" stroke="#333" stroke-width="1.3"/><path d="M688.8 413V453.5" stroke="#333" stroke-width="1.3"/><path d="M688.8 413H706.5" stroke="#333" stroke-width="1.3"/><path d="M688.8 453.5H706.5" stroke="#333" stroke-width="1.3"/><path d="M680.7 433.5H698.5" stroke="#333" stroke-width="1.3"/></svg><svg class="a" style="left:469.8px;top:130.4px" width="24" height="24"><circle cx="12" cy="12" r="11.7" fill="#5f6368"/><path d="M7.5 7.5L16.5 16.5M16.5 7.5L7.5 16.5" stroke="#eee" stroke-width="1.4"/></svg><svg class="a" style="left:718.4px;top:130.4px" width="24" height="24"><circle cx="12" cy="12" r="11.7" fill="#5f6368"/><path d="M16.3 10 A4.6 4.6 0 1 0 16.6 13.5" fill="none" stroke="#eee" stroke-width="1.5"/><path d="M13.8 9.6 L17.3 10.3 L17 6.8Z" fill="#eee"/></svg><svg class="a" style="left:469.8px;top:613.3px" width="24" height="24"><circle cx="12" cy="12" r="11.7" fill="#5f6368"/><path d="M9.2 11V9 C9.2 5.8 14.8 5.8 14.8 9 V11" fill="none" stroke="#eee" stroke-width="1.3"/><rect x="7.8" y="11" width="8.4" height="6.5" rx="1" fill="none" stroke="#eee" stroke-width="1.3"/><rect x="11.3" y="13" width="1.4" height="2.5" fill="#eee"/></svg><svg class="a" style="left:718.4px;top:613.3px" width="24" height="24"><circle cx="12" cy="12" r="11.7" fill="#5f6368"/><path d="M8 8L16 16" stroke="#eee" stroke-width="1.4"/><path d="M7 7L12 7.8L7.8 12Z M17 17L12 16.2L16.2 12Z" fill="#eee"/></svg><div class="t" style="left:597px;top:134.5px;font-size:10.5px;color:#555;">4.5"</div><div class="t" style="left:743px;top:375.5px;font-size:10.5px;color:#555;">9.25"</div>
<svg class="a" style="left:0;top:0" width="1434" height="890"><rect x="1009" y="236" width="234.5" height="152" fill="url(#meadowBg)"/><clipPath id="mclip"><rect x="1009" y="180" width="234.5" height="208"/></clipPath><g clip-path="url(#mclip)"><path d="M1025 190 C1028 215 1032 240 1031 265 C1030 285 1033 300 1036 330" fill="none" stroke="#2f8a70" stroke-width="0.9"/><path d="M1031 250 C1024 244 1018 246 1012 252 M1031 262 C1040 254 1046 248 1050 244 M1030 235 C1036 228 1040 226 1044 224" fill="none" stroke="#2f8a70" stroke-width="0.8"/><ellipse cx="1026" cy="196" rx="1.2" ry="4" transform="rotate(-30 1026 196)" fill="#2f8a70"/><ellipse cx="1028" cy="204" rx="1.2" ry="4" transform="rotate(35 1028 204)" fill="#2f8a70"/><ellipse cx="1027" cy="212" rx="1.2" ry="4" transform="rotate(-35 1027 212)" fill="#2f8a70"/><ellipse cx="1030" cy="220" rx="1.2" ry="4" transform="rotate(40 1030 220)" fill="#2f8a70"/><ellipse cx="1029" cy="228" rx="1.2" ry="4" transform="rotate(-40 1029 228)" fill="#2f8a70"/><ellipse cx="1032" cy="236" rx="1.2" ry="4" transform="rotate(45 1032 236)" fill="#2f8a70"/><ellipse cx="1020" cy="247" rx="1.2" ry="4" transform="rotate(-70 1020 247)" fill="#2f8a70"/><ellipse cx="1014" cy="250" rx="1.2" ry="4" transform="rotate(-60 1014 250)" fill="#2f8a70"/><ellipse cx="1040" cy="257" rx="1.2" ry="4" transform="rotate(-50 1040 257)" fill="#2f8a70"/><ellipse cx="1046" cy="249" rx="1.2" ry="4" transform="rotate(-40 1046 249)" fill="#2f8a70"/><ellipse cx="1038" cy="230" rx="1.2" ry="4" transform="rotate(-20 1038 230)" fill="#2f8a70"/><ellipse cx="1043" cy="226" rx="1.2" ry="4" transform="rotate(-10 1043 226)" fill="#2f8a70"/><ellipse cx="1025" cy="241" rx="1.2" ry="4" transform="rotate(-80 1025 241)" fill="#2f8a70"/><ellipse cx="1031" cy="244" rx="1.2" ry="4" transform="rotate(60 1031 244)" fill="#2f8a70"/><ellipse cx="1016" cy="258" rx="1.2" ry="4" transform="rotate(20 1016 258)" fill="#2f8a70"/><ellipse cx="1048" cy="262" rx="1.2" ry="4" transform="rotate(30 1048 262)" fill="#2f8a70"/><path d="M1012 300 C1015 280 1025 270 1035 278" fill="none" stroke="#7cc36e" stroke-width="1.5"/><path d="M1014 320 C1016 300 1028 292 1034 300" fill="none" stroke="#62b35a" stroke-width="1.5"/><path d="M1083.2 388 Q1086.1 318.5 1092.3 249.1 Q1088.0 318.5 1086.4 388Z" fill="#5bb56a"/><path d="M1093.0 388 Q1093.7 315.7 1094.9 243.5 Q1095.6 315.7 1096.1 388Z" fill="#8fd08a"/><path d="M1105.3 388 Q1106.7 321.2 1109.4 254.4 Q1108.6 321.2 1108.4 388Z" fill="#5bb56a"/><path d="M1229.1 388 Q1231.0 332.9 1234.9 277.8 Q1232.9 332.9 1232.3 388Z" fill="#8fd08a"/><path d="M1018.9 388 Q1020.4 320.6 1023.4 253.3 Q1022.5 320.6 1022.3 388Z" fill="#8fd08a"/><path d="M1040.0 388 Q1038.2 317.5 1033.2 247.1 Q1041.5 317.5 1045.5 388Z" fill="#79c47f"/><path d="M1031.5 388 Q1027.4 331.1 1017.5 274.3 Q1029.4 331.1 1034.8 388Z" fill="#5bb56a"/><path d="M1138.8 388 Q1139.6 332.6 1140.9 277.1 Q1142.4 332.6 1143.4 388Z" fill="#4aa85e"/><path d="M1116.1 388 Q1114.8 341.7 1111.0 295.4 Q1117.0 341.7 1119.8 388Z" fill="#79c47f"/><path d="M1170.3 388 Q1172.3 321.3 1176.3 254.6 Q1175.1 321.3 1174.9 388Z" fill="#4aa85e"/><path d="M1178.0 388 Q1185.9 322.6 1203.7 257.3 Q1187.9 322.6 1181.4 388Z" fill="#8fd08a"/><path d="M1045.5 388 Q1052.8 324.3 1069.3 260.5 Q1055.4 324.3 1049.7 388Z" fill="#5bb56a"/><path d="M1185.9 388 Q1192.4 331.2 1206.7 274.4 Q1194.7 331.2 1189.9 388Z" fill="#4aa85e"/><path d="M1145.3 388 Q1145.8 331.4 1145.9 274.8 Q1149.1 331.4 1150.8 388Z" fill="#4aa85e"/><path d="M1117.4 388 Q1111.8 333.9 1098.0 279.8 Q1114.9 333.9 1122.5 388Z" fill="#8fd08a"/><path d="M1074.1 388 Q1077.2 325.6 1084.0 263.1 Q1079.0 325.6 1077.1 388Z" fill="#8fd08a"/><path d="M1090.4 388 Q1091.0 332.3 1091.9 276.7 Q1093.2 332.3 1094.0 388Z" fill="#4aa85e"/><path d="M1036.5 388 Q1035.9 321.4 1033.8 254.9 Q1039.3 321.4 1042.1 388Z" fill="#5bb56a"/><path d="M1046.2 388 Q1043.6 326.0 1036.8 264.1 Q1045.6 326.0 1049.6 388Z" fill="#8fd08a"/><path d="M1209.1 388 Q1208.7 322.4 1206.9 256.7 Q1211.1 322.4 1213.2 388Z" fill="#8fd08a"/><path d="M1231.3 388 Q1227.1 318.5 1216.9 249.1 Q1229.4 318.5 1235.0 388Z" fill="#79c47f"/><path d="M1009.9 388 Q1005.9 338.9 995.9 289.9 Q1008.2 338.9 1013.7 388Z" fill="#79c47f"/><path d="M1104.1 388 Q1106.3 325.1 1110.4 262.2 Q1109.8 325.1 1110.0 388Z" fill="#5bb56a"/><path d="M1113.3 388 Q1121.1 340.1 1138.4 292.3 Q1124.1 340.1 1118.4 388Z" fill="#8fd08a"/><path d="M1100.0 388 Q1100.6 325.8 1101.2 263.6 Q1103.1 325.8 1104.2 388Z" fill="#79c47f"/><path d="M1022.7 388 Q1018.5 320.3 1007.9 252.5 Q1020.9 320.3 1026.8 388Z" fill="#5bb56a"/><path d="M1030.0 388 Q1031.8 331.0 1034.8 274.0 Q1035.3 331.0 1035.9 388Z" fill="#5bb56a"/><path d="M1023.0 388 Q1022.1 320.2 1019.3 252.5 Q1025.1 320.2 1027.9 388Z" fill="#4aa85e"/><path d="M1147.7 388 Q1142.8 328.2 1130.7 268.4 Q1145.5 328.2 1152.2 388Z" fill="#8fd08a"/><path d="M1118.8 388 Q1114.5 323.4 1103.6 258.7 Q1117.6 323.4 1124.0 388Z" fill="#4aa85e"/><path d="M1119.2 388 Q1120.2 334.8 1121.8 281.5 Q1122.3 334.8 1122.8 388Z" fill="#4aa85e"/><path d="M1041.0 388 Q1034.8 330.3 1019.7 272.6 Q1037.6 330.3 1045.6 388Z" fill="#5bb56a"/><path d="M1170.2 388 Q1168.9 321.8 1165.2 255.7 Q1171.0 321.8 1173.7 388Z" fill="#79c47f"/><path d="M1131.8 388 Q1130.0 337.4 1125.1 286.7 Q1132.2 337.4 1135.5 388Z" fill="#79c47f"/><path d="M1195.8 388 Q1200.1 338.5 1209.6 289.1 Q1202.3 338.5 1199.5 388Z" fill="#8fd08a"/><path d="M1090.3 388 Q1084.0 314.9 1068.6 241.7 Q1086.3 314.9 1094.1 388Z" fill="#4aa85e"/><path d="M1051.6 388 Q1050.3 332.2 1046.5 276.3 Q1053.6 332.2 1057.0 388Z" fill="#4aa85e"/><path d="M1230.6 388 Q1227.2 324.9 1218.5 261.9 Q1229.4 324.9 1234.3 388Z" fill="#79c47f"/><path d="M1085.6 388 Q1093.9 328.5 1112.3 269.0 Q1096.8 328.5 1090.4 388Z" fill="#5bb56a"/><path d="M1119.6 388 Q1124.7 333.6 1136.2 279.2 Q1126.7 333.6 1122.8 388Z" fill="#5bb56a"/><path d="M1219.7 388 Q1224.3 337.5 1234.4 286.9 Q1227.0 337.5 1224.1 388Z" fill="#79c47f"/><path d="M1107.6 388 Q1102.6 333.1 1089.9 278.2 Q1106.1 333.1 1113.5 388Z" fill="#8fd08a"/><path d="M1115.6 388 Q1110.1 336.3 1096.6 284.6 Q1112.2 336.3 1119.1 388Z" fill="#79c47f"/><path d="M1013.0 388 Q1013.4 331.7 1013.7 275.4 Q1016.4 331.7 1017.9 388Z" fill="#8fd08a"/><path d="M1161.1 388 Q1162.5 324.5 1165.2 261.0 Q1164.5 324.5 1164.5 388Z" fill="#5bb56a"/><path d="M1193.4 388 Q1188.5 335.8 1176.2 283.6 Q1191.7 335.8 1198.7 388Z" fill="#79c47f"/><path d="M1108.7 388 Q1114.3 340.2 1126.8 292.3 Q1116.5 340.2 1112.3 388Z" fill="#4aa85e"/><path d="M1056.8 388 Q1061.6 329.0 1072.0 270.1 Q1063.9 329.0 1060.8 388Z" fill="#8fd08a"/><path d="M1201.4 388 Q1206.1 315.8 1216.2 243.7 Q1209.5 315.8 1207.0 388Z" fill="#8fd08a"/><path d="M1200.8 388 Q1196.0 340.3 1184.1 292.7 Q1198.0 340.3 1204.3 388Z" fill="#5bb56a"/><path d="M1210.6 388 Q1213.3 337.3 1218.7 286.6 Q1216.5 337.3 1215.9 388Z" fill="#79c47f"/><path d="M1047.0 388 Q1051.3 328.2 1060.6 268.4 Q1054.1 328.2 1051.7 388Z" fill="#4aa85e"/><path d="M1166.0 388 Q1166.8 329.9 1167.8 271.8 Q1170.0 329.9 1171.3 388Z" fill="#5bb56a"/><path d="M1064.9 388 Q1069.9 322.3 1080.8 256.6 Q1072.6 322.3 1069.4 388Z" fill="#5bb56a"/><path d="M1184.4 388 Q1184.5 341.4 1184.0 294.7 Q1187.4 341.4 1189.3 388Z" fill="#79c47f"/><path d="M1168.6 388 Q1170.1 319.3 1172.8 250.6 Q1173.1 319.3 1173.6 388Z" fill="#3aa845"/><path d="M1170.6 388 Q1178.0 334.6 1194.7 281.1 Q1180.5 334.6 1174.6 388Z" fill="#58b848"/><path d="M1215.6 388 Q1215.7 310.3 1215.3 232.6 Q1218.5 310.3 1220.2 388Z" fill="#46a83c"/><path d="M1110.8 388 Q1107.6 305.6 1099.5 223.2 Q1109.6 305.6 1114.1 388Z" fill="#1f7f35"/><path d="M1189.5 388 Q1185.5 335.3 1175.2 282.6 Q1189.0 335.3 1195.4 388Z" fill="#1f7f35"/><path d="M1040.5 388 Q1048.3 334.8 1065.8 281.6 Q1050.6 334.8 1044.4 388Z" fill="#2f9a3e"/><path d="M1099.0 388 Q1107.6 320.5 1126.7 253.1 Q1111.4 320.5 1105.4 388Z" fill="#3aa845"/><path d="M1171.9 388 Q1171.4 338.8 1169.5 289.6 Q1174.2 338.8 1176.6 388Z" fill="#1f7f35"/><path d="M1080.9 388 Q1074.8 329.0 1059.5 270.0 Q1077.9 329.0 1086.1 388Z" fill="#46a83c"/><path d="M1171.4 388 Q1172.5 316.8 1174.4 245.7 Q1175.1 316.8 1175.6 388Z" fill="#2f9a3e"/><path d="M1032.2 388 Q1029.4 336.1 1021.8 284.1 Q1033.3 336.1 1038.7 388Z" fill="#2f9a3e"/><path d="M1069.1 388 Q1074.1 304.4 1085.1 220.9 Q1076.6 304.4 1073.2 388Z" fill="#3aa845"/><path d="M1197.4 388 Q1201.4 333.6 1209.6 279.2 Q1205.5 333.6 1204.2 388Z" fill="#46a83c"/><path d="M1041.1 388 Q1043.3 336.1 1047.5 284.2 Q1046.8 336.1 1046.9 388Z" fill="#2f9a3e"/><path d="M1071.0 388 Q1067.6 331.8 1058.5 275.6 Q1071.5 331.8 1077.6 388Z" fill="#1f7f35"/><path d="M1226.9 388 Q1232.1 325.8 1243.7 263.7 Q1234.1 325.8 1230.2 388Z" fill="#3aa845"/><path d="M1022.4 388 Q1022.6 334.1 1022.3 280.1 Q1025.2 334.1 1026.8 388Z" fill="#58b848"/><path d="M1105.2 388 Q1107.6 336.0 1112.8 283.9 Q1109.5 336.0 1108.3 388Z" fill="#3aa845"/><path d="M1226.7 388 Q1223.8 337.9 1216.6 287.8 Q1226.1 337.9 1230.4 388Z" fill="#1f7f35"/><path d="M1153.7 388 Q1150.3 322.1 1141.4 256.2 Q1153.1 322.1 1158.5 388Z" fill="#3aa845"/><path d="M1070.7 388 Q1078.8 331.9 1097.0 275.9 Q1080.7 331.9 1073.9 388Z" fill="#2f9a3e"/><path d="M1178.1 388 Q1174.4 322.8 1165.0 257.7 Q1177.4 322.8 1183.0 388Z" fill="#46a83c"/><path d="M1031.4 388 Q1031.4 332.5 1030.5 277.0 Q1034.3 332.5 1036.4 388Z" fill="#46a83c"/><path d="M1234.1 388 Q1230.6 314.1 1221.8 240.2 Q1233.0 314.1 1238.0 388Z" fill="#3aa845"/><path d="M1201.4 388 Q1204.4 328.4 1210.6 268.9 Q1207.2 328.4 1206.1 388Z" fill="#1f7f35"/><path d="M1236.0 388 Q1229.8 333.1 1214.5 278.3 Q1233.1 333.1 1241.5 388Z" fill="#1f7f35"/><path d="M1107.5 388 Q1110.9 305.0 1118.1 222.0 Q1113.6 305.0 1112.1 388Z" fill="#58b848"/><path d="M1163.8 388 Q1160.8 313.1 1153.0 238.3 Q1163.3 313.1 1168.0 388Z" fill="#46a83c"/><path d="M1050.1 388 Q1043.6 312.7 1027.6 237.4 Q1046.3 312.7 1054.6 388Z" fill="#1f7f35"/><path d="M1233.2 388 Q1230.7 322.7 1223.8 257.4 Q1234.8 322.7 1240.0 388Z" fill="#1f7f35"/><path d="M1058.3 388 Q1056.5 309.6 1051.7 231.2 Q1058.5 309.6 1061.6 388Z" fill="#1f7f35"/><path d="M1125.1 388 Q1125.8 310.2 1126.9 232.5 Q1127.6 310.2 1128.2 388Z" fill="#1f7f35"/><path d="M1197.9 388 Q1200.1 308.2 1204.5 228.4 Q1202.9 308.2 1202.5 388Z" fill="#1f7f35"/><path d="M1077.6 388 Q1079.9 311.4 1084.5 234.8 Q1083.0 311.4 1082.8 388Z" fill="#3aa845"/><path d="M1160.6 388 Q1167.2 328.8 1181.8 269.6 Q1169.9 328.8 1165.1 388Z" fill="#1f7f35"/><path d="M1174.9 388 Q1172.8 320.8 1166.8 253.6 Q1176.0 320.8 1180.4 388Z" fill="#3aa845"/><path d="M1016.5 388 Q1023.5 333.1 1038.8 278.1 Q1026.8 333.1 1022.0 388Z" fill="#58b848"/><path d="M1038.4 388 Q1039.8 321.9 1041.8 255.7 Q1043.6 321.9 1044.8 388Z" fill="#2f9a3e"/><path d="M1199.5 388 Q1206.6 324.0 1222.0 260.1 Q1210.0 324.0 1205.2 388Z" fill="#3aa845"/><path d="M1025.5 388 Q1028.9 304.5 1035.8 221.0 Q1033.0 304.5 1032.3 388Z" fill="#46a83c"/><path d="M1201.8 388 Q1204.8 323.1 1211.0 258.2 Q1208.2 323.1 1207.3 388Z" fill="#3aa845"/><path d="M1120.5 388 Q1126.2 303.1 1138.4 218.2 Q1129.8 303.1 1126.5 388Z" fill="#58b848"/><path d="M1216.1 388 Q1217.7 306.3 1220.4 224.6 Q1221.3 306.3 1222.1 388Z" fill="#46a83c"/><path d="M1065.1 388 Q1062.7 305.7 1056.3 223.4 Q1066.3 305.7 1071.0 388Z" fill="#3aa845"/><path d="M1059.8 388 Q1060.5 326.4 1061.0 264.8 Q1064.3 326.4 1066.2 388Z" fill="#2f9a3e"/><path d="M1147.8 388 Q1185.3 321.5 1225 255 Q1189.7 321.5 1152.2 388Z" fill="#1f8a3a"/><path d="M1168.0 388 Q1203.0 331.5 1240 275 Q1207.0 331.5 1172.0 388Z" fill="#1f8a3a"/><path d="M1138.0 388 Q1165.5 310.0 1195 232 Q1169.5 310.0 1142.0 388Z" fill="#1f8a3a"/><path d="M1158.2 388 Q1165.7 313.0 1175 238 Q1169.3 313.0 1161.8 388Z" fill="#1f8a3a"/><path d="M1118.0 388 Q1088.0 325.0 1060 262 Q1092.0 325.0 1122.0 388Z" fill="#1f8a3a"/><path d="M1098.2 388 Q1093.2 310.0 1090 232 Q1096.8 310.0 1101.8 388Z" fill="#1f8a3a"/><path d="M1087.4 388 Q1076.4 305.0 1068 222 Q1081.6 305.0 1092.6 388Z" fill="#1f8a3a"/><path d="M1102.6 388 Q1125.1 308.0 1150 228 Q1129.9 308.0 1107.4 388Z" fill="#1f8a3a"/><path d="M1127.8 388 Q1117.8 310.0 1110 232 Q1122.2 310.0 1132.2 388Z" fill="#1f8a3a"/><path d="M1177.4 388 Q1203.4 325.0 1232 262 Q1208.6 325.0 1182.6 388Z" fill="#1f8a3a"/><path d="M1192.6 388 Q1215.1 344.0 1240 300 Q1219.9 344.0 1197.4 388Z" fill="#1f8a3a"/><path d="M1157.8 388 Q1182.8 314.0 1210 240 Q1187.2 314.0 1162.2 388Z" fill="#1f8a3a"/><path d="M1118.0 388 Q1125.5 303.0 1135 218 Q1129.5 303.0 1122.0 388Z" fill="#1f8a3a"/><path d="M1057.8 388 Q1047.8 324.0 1040 260 Q1052.2 324.0 1062.2 388Z" fill="#1f8a3a"/><path d="M1213.0 388 Q1227.0 336.5 1243 285 Q1231.0 336.5 1217.0 388Z" fill="#1f8a3a"/><path d="M1117.9 388 Q1123.2 361.1 1134.4 334.2 Q1127.0 361.1 1124.3 388Z" fill="#58b848"/><path d="M1023.6 388 Q1021.3 347.7 1014.8 307.4 Q1025.5 347.7 1030.6 388Z" fill="#6cc25a"/><path d="M1151.4 388 Q1152.3 347.3 1153.5 306.7 Q1155.9 347.3 1157.3 388Z" fill="#3aa845"/><path d="M1167.9 388 Q1166.0 360.9 1160.5 333.8 Q1169.7 360.9 1174.0 388Z" fill="#2a8f3a"/><path d="M1114.9 388 Q1123.6 363.2 1142.7 338.4 Q1127.3 363.2 1121.1 388Z" fill="#6cc25a"/><path d="M1235.0 388 Q1228.9 367.4 1213.8 346.8 Q1232.4 367.4 1240.8 388Z" fill="#2a8f3a"/><path d="M1237.7 388 Q1245.5 353.7 1262.4 319.3 Q1250.2 353.7 1245.4 388Z" fill="#3aa845"/><path d="M1141.2 388 Q1143.1 347.5 1146.3 307.1 Q1147.8 347.5 1149.0 388Z" fill="#58b848"/><path d="M1148.0 388 Q1145.5 359.8 1139.2 331.6 Q1148.2 359.8 1152.4 388Z" fill="#6cc25a"/><path d="M1061.1 388 Q1061.7 366.4 1062.5 344.9 Q1064.2 366.4 1065.2 388Z" fill="#3aa845"/><path d="M1227.8 388 Q1227.8 361.0 1226.6 334.1 Q1231.9 361.0 1234.7 388Z" fill="#2a8f3a"/><path d="M1087.5 388 Q1093.4 351.9 1106.5 315.8 Q1095.8 351.9 1091.5 388Z" fill="#6cc25a"/><path d="M1201.9 388 Q1209.7 347.0 1226.7 306.0 Q1213.8 347.0 1208.8 388Z" fill="#6cc25a"/><path d="M1064.5 388 Q1064.4 345.6 1062.8 303.2 Q1068.8 345.6 1072.0 388Z" fill="#3aa845"/><path d="M1091.3 388 Q1088.8 354.7 1082.2 321.4 Q1091.3 354.7 1095.5 388Z" fill="#3aa845"/><path d="M1018.8 388 Q1021.7 360.5 1027.8 333.1 Q1024.5 360.5 1023.4 388Z" fill="#6cc25a"/><path d="M1107.5 388 Q1113.0 351.9 1124.7 315.8 Q1117.3 351.9 1114.7 388Z" fill="#2a8f3a"/><path d="M1212.1 388 Q1215.6 364.3 1222.5 340.6 Q1220.2 364.3 1219.7 388Z" fill="#58b848"/><path d="M1174.5 388 Q1179.1 345.2 1189.0 302.5 Q1182.6 345.2 1180.3 388Z" fill="#58b848"/><path d="M1156.0 388 Q1150.7 351.2 1137.3 314.3 Q1155.4 351.2 1163.7 388Z" fill="#58b848"/><path d="M1046.4 388 Q1044.2 354.4 1038.0 320.7 Q1047.2 354.4 1051.5 388Z" fill="#6cc25a"/><path d="M1100.7 388 Q1101.8 350.0 1103.2 311.9 Q1105.8 350.0 1107.4 388Z" fill="#3aa845"/><path d="M1044.3 388 Q1041.5 348.0 1033.5 308.1 Q1046.1 348.0 1052.0 388Z" fill="#2a8f3a"/><path d="M1134.3 388 Q1133.2 355.3 1129.4 322.6 Q1137.4 355.3 1141.3 388Z" fill="#2a8f3a"/><path d="M1039.0 388 Q1033.9 348.8 1021.2 309.6 Q1037.1 348.8 1044.3 388Z" fill="#3aa845"/><path d="M1081.3 388 Q1086.9 353.2 1099.2 318.4 Q1089.8 353.2 1086.1 388Z" fill="#3aa845"/><path d="M1181.4 388 Q1181.3 354.3 1180.1 320.6 Q1185.0 354.3 1187.5 388Z" fill="#2a8f3a"/><path d="M1069.1 388 Q1070.3 362.8 1072.1 337.6 Q1074.1 362.8 1075.4 388Z" fill="#6cc25a"/><path d="M1034.7 388 Q1038.2 356.6 1044.9 325.2 Q1042.6 356.6 1042.2 388Z" fill="#58b848"/><path d="M1027.4 388 Q1027.0 366.4 1024.9 344.8 Q1030.9 366.4 1034.0 388Z" fill="#2a8f3a"/><path d="M1230.2 388 Q1236.6 365.2 1250.9 342.4 Q1239.0 365.2 1234.3 388Z" fill="#3aa845"/><path d="M1104.6 388 Q1110.7 363.1 1123.7 338.2 Q1115.4 363.1 1112.4 388Z" fill="#2a8f3a"/><path d="M1005.4 388 Q1013.3 353.8 1030.4 319.6 Q1017.6 353.8 1012.7 388Z" fill="#2a8f3a"/><path d="M1234.2 388 Q1229.3 350.2 1217.0 312.4 Q1232.0 350.2 1238.8 388Z" fill="#3aa845"/><path d="M1225.8 388 Q1229.4 362.0 1236.7 336.1 Q1233.6 362.0 1232.8 388Z" fill="#2a8f3a"/><path d="M1026.6 388 Q1020.1 363.4 1004.0 338.8 Q1022.8 363.4 1031.1 388Z" fill="#3aa845"/><path d="M1157.5 388 Q1153.0 351.6 1141.4 315.2 Q1156.0 351.6 1162.6 388Z" fill="#2a8f3a"/><path d="M1169.4 388 Q1164.2 346.8 1151.0 305.6 Q1167.9 346.8 1175.5 388Z" fill="#58b848"/><path d="M1097.8 388 Q1100.1 349.6 1104.9 311.2 Q1102.5 349.6 1101.8 388Z" fill="#6cc25a"/><path d="M1238.5 388 Q1237.2 351.0 1233.0 313.9 Q1241.6 351.0 1245.8 388Z" fill="#58b848"/><rect x="1009" y="372" width="234.5" height="16" fill="#2f9c4a" opacity="0.35"/><use href="#daff" transform="translate(1055,271) rotate(-15) scale(1.55)"/><use href="#daff" transform="translate(1205,297) rotate(20) scale(1.4)"/><use href="#tulipR" transform="translate(1107.5,270.7) rotate(-15) scale(1.65)"/><use href="#tulipR" transform="translate(1019,309) rotate(-20) scale(1.4)"/><use href="#tulipR" transform="translate(1203,323) rotate(10) scale(1.3)"/><use href="#tulipP" transform="translate(1047.8,309) rotate(15) scale(1.5)"/><use href="#tulipP" transform="translate(1166,335) rotate(8) scale(1.5)"/><use href="#daisy" transform="translate(1143,301.8) scale(1.5)"/><use href="#daisy" transform="translate(1063,347) scale(1.25)"/><use href="#daisy" transform="translate(1187.4,372) scale(1.2)"/><use href="#bfly" transform="translate(1155,263.6) rotate(15) scale(2.0)"/><use href="#bfly" transform="translate(1082,356.7) rotate(20) scale(1.65)"/><use href="#bflyO" transform="translate(1083.6,251.6) rotate(25) scale(1.45)"/><use href="#bflyO" transform="translate(1188.6,347) rotate(35) scale(1.45)"/><use href="#bug" transform="translate(1090,277) scale(1.1)"/><use href="#bug" transform="translate(1182,258)"/><use href="#bug" transform="translate(1040,330)"/><use href="#star" transform="translate(1025,385) scale(1.3)"/><use href="#star" transform="translate(1061,378) scale(1.3)"/><use href="#star" transform="translate(1107,321) scale(1.3)"/><use href="#star" transform="translate(1093,338) scale(1.3)"/><use href="#star" transform="translate(1163,374) scale(1.3)"/><use href="#star" transform="translate(1235,370) scale(1.3)"/><use href="#wfl" transform="translate(1022,362) scale(1.3)"/><use href="#wfl" transform="translate(1034,370) scale(1.3)"/><use href="#wfl" transform="translate(1135,338) scale(1.3)"/><use href="#wfl" transform="translate(1141,357) scale(1.3)"/><use href="#wfl" transform="translate(1128,367) scale(1.3)"/><use href="#wfl" transform="translate(1213,377) scale(1.3)"/></g><clipPath id="braidL"><path d="M1263 240 C1257 262 1258 285 1267 303 L1286 300 L1286 240Z"/></clipPath><clipPath id="braidR"><path d="M1328 240 C1334 262 1333 285 1324 303 L1305 300 L1305 240Z"/></clipPath><g clip-path="url(#braidL)"><rect x="1255" y="235" width="40" height="75" fill="#f0efee"/><path d="M1255 220 L1340 260 M1255 260 L1340 220" stroke="#dcdad8" stroke-width="0.8"/><path d="M1255 228 L1340 268 M1255 268 L1340 228" stroke="#dcdad8" stroke-width="0.8"/><path d="M1255 236 L1340 276 M1255 276 L1340 236" stroke="#dcdad8" stroke-width="0.8"/><path d="M1255 244 L1340 284 M1255 284 L1340 244" stroke="#dcdad8" stroke-width="0.8"/><path d="M1255 252 L1340 292 M1255 292 L1340 252" stroke="#dcdad8" stroke-width="0.8"/><path d="M1255 260 L1340 300 M1255 300 L1340 260" stroke="#dcdad8" stroke-width="0.8"/><path d="M1255 268 L1340 308 M1255 308 L1340 268" stroke="#dcdad8" stroke-width="0.8"/><path d="M1255 276 L1340 316 M1255 316 L1340 276" stroke="#dcdad8" stroke-width="0.8"/><path d="M1255 284 L1340 324 M1255 324 L1340 284" stroke="#dcdad8" stroke-width="0.8"/><path d="M1255 292 L1340 332 M1255 332 L1340 292" stroke="#dcdad8" stroke-width="0.8"/><path d="M1255 300 L1340 340 M1255 340 L1340 300" stroke="#dcdad8" stroke-width="0.8"/><path d="M1255 308 L1340 348 M1255 348 L1340 308" stroke="#dcdad8" stroke-width="0.8"/></g><g clip-path="url(#braidR)"><rect x="1300" y="235" width="40" height="75" fill="#f0efee"/><path d="M1255 220 L1340 260 M1255 260 L1340 220" stroke="#dcdad8" stroke-width="0.8"/><path d="M1255 228 L1340 268 M1255 268 L1340 228" stroke="#dcdad8" stroke-width="0.8"/><path d="M1255 236 L1340 276 M1255 276 L1340 236" stroke="#dcdad8" stroke-width="0.8"/><path d="M1255 244 L1340 284 M1255 284 L1340 244" stroke="#dcdad8" stroke-width="0.8"/><path d="M1255 252 L1340 292 M1255 292 L1340 252" stroke="#dcdad8" stroke-width="0.8"/><path d="M1255 260 L1340 300 M1255 300 L1340 260" stroke="#dcdad8" stroke-width="0.8"/><path d="M1255 268 L1340 308 M1255 308 L1340 268" stroke="#dcdad8" stroke-width="0.8"/><path d="M1255 276 L1340 316 M1255 316 L1340 276" stroke="#dcdad8" stroke-width="0.8"/><path d="M1255 284 L1340 324 M1255 324 L1340 284" stroke="#dcdad8" stroke-width="0.8"/><path d="M1255 292 L1340 332 M1255 332 L1340 292" stroke="#dcdad8" stroke-width="0.8"/><path d="M1255 300 L1340 340 M1255 340 L1340 300" stroke="#dcdad8" stroke-width="0.8"/><path d="M1255 308 L1340 348 M1255 348 L1340 308" stroke="#dcdad8" stroke-width="0.8"/></g><path d="M1280 250 C1280 236 1312 236 1312 250 L1314 297 C1305 302 1287 302 1278 297Z" fill="#e9a9e0"/><path d="M1279 285 H1313 M1279 291.5 H1313" stroke="#d46ab8" stroke-width="1.8"/><path d="M1261 246 C1261 228 1265 208 1272 192 C1276 183 1278 177 1276 171 C1274 165 1276 161 1281 162 C1287 163 1291 170 1296 180 C1304 196 1320 220 1329 246 C1322 249 1270 249 1261 246Z" fill="#6aa3e1"/><path d="M1262 239 C1280 243 1312 243 1328 239" fill="none" stroke="#5a92d4" stroke-width="1.5"/><g fill="none" stroke="#86b7ec" stroke-width="1.2" opacity="0.8"><circle cx="1295" cy="218" r="6"/><path d="M1278 225 C1285 215 1290 205 1290 195 M1312 225 C1305 215 1300 205 1299 195"/></g><ellipse cx="1296" cy="246" rx="10" ry="8" fill="#f6dbd0"/><path d="M1297 263 V250" stroke="#4f9a36" stroke-width="1.4"/><path d="M1297 253 C1292 246 1285 245 1284 249 C1286 254 1292 255 1297 253Z" fill="#8cc850" stroke="#5e9f3a" stroke-width="0.6"/><path d="M1297 255 C1302 250 1309 251 1310 254 C1307 258 1301 258 1297 255Z" fill="#8cc850" stroke="#5e9f3a" stroke-width="0.6"/><path d="M1286 265 H1308 L1303 282 H1291Z" fill="#c9773a"/><rect x="1285" y="262" width="24" height="5" rx="1" fill="#d98a48"/><ellipse cx="1287" cy="278" rx="6" ry="5.5" fill="#f7d8c6"/><ellipse cx="1306" cy="278" rx="6" ry="5.5" fill="#f7d8c6"/><g transform="translate(1295 170)" fill="#f6c93a"><circle cx="0" cy="-5.5" r="4.2"/><circle cx="5.2" cy="-1.7" r="4.2"/><circle cx="3.2" cy="4.5" r="4.2"/><circle cx="-3.2" cy="4.5" r="4.2"/><circle cx="-5.2" cy="-1.7" r="4.2"/><circle r="2" fill="#fff"/></g><path d="M1269 290 C1264 284 1258 282 1258 286 L1258 295 C1260 299 1265 296 1269 290Z M1269 290 C1274 284 1280 282 1280 286 L1280 295 C1278 299 1273 296 1269 290Z" fill="#f5d64f"/><path d="M1325 290 C1320 284 1314 282 1314 286 L1314 295 C1316 299 1321 296 1325 290Z M1325 290 C1330 284 1336 282 1336 286 L1336 295 C1334 299 1329 296 1325 290Z" fill="#f5d64f"/><ellipse cx="1283" cy="301" rx="9" ry="5" fill="#8ccc4a"/><ellipse cx="1310" cy="301" rx="9" ry="5" fill="#8ccc4a"/><path d="M1028 485 C1034 474 1046 476 1048 492 L1040 502Z" fill="#f4d03f"/><path d="M1106 474 L1122 468 L1125 492 L1108 497Z" fill="#f4d03f"/><path d="M1040 522 C1034 528 1034 538 1042 541 L1058 539 L1058 522Z" fill="#f4d03f"/><path d="M1098 522 C1108 526 1112 536 1108 541 L1092 541 L1094 522Z" fill="#f4d03f"/><ellipse cx="1056" cy="537" rx="13" ry="6" fill="#78c6ea"/><ellipse cx="1093" cy="537" rx="12" ry="6" fill="#78c6ea"/><circle cx="1025" cy="489" r="8.5" fill="#f2d0c2"/><circle cx="1126" cy="477" r="7.5" fill="#f2d0c2"/><path d="M1013 505 L1034 498 L1044 522 L1026 530 Z" fill="#e6e6e6" stroke="#cfcfcf" stroke-width="0.8"/><path d="M1030 498 C1030 484 1046 482 1046 505" fill="none" stroke="#d6d6d6" stroke-width="2.2"/><path d="M1038 522 L1052 534 L1056 531" fill="none" stroke="#dcdcdc" stroke-width="3"/><path d="M1044 460 C1036 475 1037 500 1043 515 C1050 530 1063 541 1076 543 C1090 538 1102 528 1108 515 C1115 500 1116 480 1111 466 C1100 456 1060 454 1044 460Z" fill="#8b581c"/><clipPath id="beardc"><path d="M1044 460 C1036 475 1037 500 1043 515 C1050 530 1063 541 1076 543 C1090 538 1102 528 1108 515 C1115 500 1116 480 1111 466 C1100 456 1060 454 1044 460Z"/></clipPath><g clip-path="url(#beardc)"><path d="M1035 455 C1050 465 1062 469 1076 477" fill="none" stroke="#b8843f" stroke-width="1.2"/><path d="M1118 455 C1104 463 1092 469 1077 477" fill="none" stroke="#b8843f" stroke-width="1.2"/><path d="M1035 461 C1050 471 1062 475 1076 483" fill="none" stroke="#b8843f" stroke-width="1.2"/><path d="M1118 461 C1104 469 1092 475 1077 483" fill="none" stroke="#b8843f" stroke-width="1.2"/><path d="M1035 467 C1050 477 1062 481 1076 489" fill="none" stroke="#b8843f" stroke-width="1.2"/><path d="M1118 467 C1104 475 1092 481 1077 489" fill="none" stroke="#b8843f" stroke-width="1.2"/><path d="M1035 473 C1050 483 1062 487 1076 495" fill="none" stroke="#b8843f" stroke-width="1.2"/><path d="M1118 473 C1104 481 1092 487 1077 495" fill="none" stroke="#b8843f" stroke-width="1.2"/><path d="M1035 479 C1050 489 1062 493 1076 501" fill="none" stroke="#b8843f" stroke-width="1.2"/><path d="M1118 479 C1104 487 1092 493 1077 501" fill="none" stroke="#b8843f" stroke-width="1.2"/><path d="M1035 485 C1050 495 1062 499 1076 507" fill="none" stroke="#b8843f" stroke-width="1.2"/><path d="M1118 485 C1104 493 1092 499 1077 507" fill="none" stroke="#b8843f" stroke-width="1.2"/><path d="M1035 491 C1050 501 1062 505 1076 513" fill="none" stroke="#b8843f" stroke-width="1.2"/><path d="M1118 491 C1104 499 1092 505 1077 513" fill="none" stroke="#b8843f" stroke-width="1.2"/><path d="M1035 497 C1050 507 1062 511 1076 519" fill="none" stroke="#b8843f" stroke-width="1.2"/><path d="M1118 497 C1104 505 1092 511 1077 519" fill="none" stroke="#b8843f" stroke-width="1.2"/><path d="M1035 503 C1050 513 1062 517 1076 525" fill="none" stroke="#b8843f" stroke-width="1.2"/><path d="M1118 503 C1104 511 1092 517 1077 525" fill="none" stroke="#b8843f" stroke-width="1.2"/><path d="M1035 509 C1050 519 1062 523 1076 531" fill="none" stroke="#b8843f" stroke-width="1.2"/><path d="M1118 509 C1104 517 1092 523 1077 531" fill="none" stroke="#b8843f" stroke-width="1.2"/><path d="M1035 515 C1050 525 1062 529 1076 537" fill="none" stroke="#b8843f" stroke-width="1.2"/><path d="M1118 515 C1104 523 1092 529 1077 537" fill="none" stroke="#b8843f" stroke-width="1.2"/><path d="M1035 521 C1050 531 1062 535 1076 543" fill="none" stroke="#b8843f" stroke-width="1.2"/><path d="M1118 521 C1104 529 1092 535 1077 543" fill="none" stroke="#b8843f" stroke-width="1.2"/><path d="M1035 527 C1050 537 1062 541 1076 549" fill="none" stroke="#b8843f" stroke-width="1.2"/><path d="M1118 527 C1104 535 1092 541 1077 549" fill="none" stroke="#b8843f" stroke-width="1.2"/><path d="M1035 533 C1050 543 1062 547 1076 555" fill="none" stroke="#b8843f" stroke-width="1.2"/><path d="M1118 533 C1104 541 1092 547 1077 555" fill="none" stroke="#b8843f" stroke-width="1.2"/><path d="M1035 539 C1050 549 1062 553 1076 561" fill="none" stroke="#b8843f" stroke-width="1.2"/><path d="M1118 539 C1104 547 1092 553 1077 561" fill="none" stroke="#b8843f" stroke-width="1.2"/><path d="M1035 545 C1050 555 1062 559 1076 567" fill="none" stroke="#b8843f" stroke-width="1.2"/><path d="M1118 545 C1104 553 1092 559 1077 567" fill="none" stroke="#b8843f" stroke-width="1.2"/><path d="M1040 482 C1052 470 1064 468 1072 460" fill="none" stroke="#6a4010" stroke-width="1"/><path d="M1112 480 C1100 470 1090 468 1082 460" fill="none" stroke="#6a4010" stroke-width="1"/><path d="M1040 492 C1052 480 1064 478 1072 470" fill="none" stroke="#6a4010" stroke-width="1"/><path d="M1112 490 C1100 480 1090 478 1082 470" fill="none" stroke="#6a4010" stroke-width="1"/><path d="M1040 502 C1052 490 1064 488 1072 480" fill="none" stroke="#6a4010" stroke-width="1"/><path d="M1112 500 C1100 490 1090 488 1082 480" fill="none" stroke="#6a4010" stroke-width="1"/><path d="M1040 512 C1052 500 1064 498 1072 490" fill="none" stroke="#6a4010" stroke-width="1"/><path d="M1112 510 C1100 500 1090 498 1082 490" fill="none" stroke="#6a4010" stroke-width="1"/><path d="M1040 522 C1052 510 1064 508 1072 500" fill="none" stroke="#6a4010" stroke-width="1"/><path d="M1112 520 C1100 510 1090 508 1082 500" fill="none" stroke="#6a4010" stroke-width="1"/><path d="M1040 532 C1052 520 1064 518 1072 510" fill="none" stroke="#6a4010" stroke-width="1"/><path d="M1112 530 C1100 520 1090 518 1082 510" fill="none" stroke="#6a4010" stroke-width="1"/><path d="M1040 542 C1052 530 1064 528 1072 520" fill="none" stroke="#6a4010" stroke-width="1"/><path d="M1112 540 C1100 530 1090 528 1082 520" fill="none" stroke="#6a4010" stroke-width="1"/><path d="M1040 552 C1052 540 1064 538 1072 530" fill="none" stroke="#6a4010" stroke-width="1"/><path d="M1112 550 C1100 540 1090 538 1082 530" fill="none" stroke="#6a4010" stroke-width="1"/></g><path d="M1043 463 C1043 445 1047 425 1056 411 C1064 400 1076 396 1086 398 C1096 401 1103 410 1105 421 C1101 420 1098 424 1098 430 C1101 442 1106 454 1108 463 C1095 457 1058 457 1043 463Z" fill="#a6d65c"/><path d="M1046 437 C1065 433 1088 433 1101 439" fill="none" stroke="#8dc43f" stroke-width="3"/><g fill="#bde37e" opacity="0.8"><circle cx="1063" cy="447" r="2.5"/><circle cx="1077" cy="448" r="2.5"/><circle cx="1091" cy="447" r="2.5"/><circle cx="1072" cy="418" r="4"/></g><ellipse cx="1077" cy="458" rx="13" ry="9" fill="#f2cfc0"/><g transform="translate(1114 435.3)" fill="#f6c93a"><circle cx="0" cy="-6.5" r="5"/><circle cx="6.2" cy="-2" r="5"/><circle cx="3.8" cy="5.3" r="5"/><circle cx="-3.8" cy="5.3" r="5"/><circle cx="-6.2" cy="-2" r="5"/><circle r="2.4" fill="#fff"/></g><ellipse cx="1128" cy="461" rx="7" ry="6" fill="#7ec8ea"/><circle cx="1123" cy="455" r="4.8" fill="#7ec8ea"/><path d="M1133 462 L1140 467 L1132 467Z" fill="#7ec8ea"/><circle cx="1122" cy="454" r="0.9" fill="#234"/><path d="M1118 455 L1115 456 L1118 457Z" fill="#f4b63a"/><clipPath id="pc0"><path d="M1198 469.5 L1198 428 C1201 424 1205 414 1209.6 398 C1213 410 1216 418 1222 423 C1228 420 1235 414 1242 412 C1248 416 1253 419 1260 412 C1266 416 1272 421 1280 414 C1286 418 1292 419 1297 424 C1302 430 1308 440 1314.7 446 L1314.7 492 L1232 492 L1232 469.5Z"/></clipPath><path d="M1198 469.5 L1198 428 C1201 424 1205 414 1209.6 398 C1213 410 1216 418 1222 423 C1228 420 1235 414 1242 412 C1248 416 1253 419 1260 412 C1266 416 1272 421 1280 414 C1286 418 1292 419 1297 424 C1302 430 1308 440 1314.7 446 L1314.7 492 L1232 492 L1232 469.5Z" fill="url(#patchTop)"/><g clip-path="url(#pc0)"><path d="M1209.6 398 C1205 415 1203 435 1204 455 L1216 455 C1217 435 1214 415 1209.6 398Z" fill="#9fd3ea" filter="url(#soft)"/><path d="M1198 440 C1205 430 1215 428 1232 432 L1232 450 L1198 450Z" fill="#8fcf8a" opacity="0.7"/><path d="M1249.5 492 Q1256.4 474.4 1272.1 456.8 Q1258.2 474.4 1252.4 492Z" fill="#8fd08a"/><path d="M1296.6 492 Q1301.7 468.8 1313.2 445.7 Q1303.5 468.8 1299.5 492Z" fill="#8fd08a"/><path d="M1289.7 492 Q1287.2 467.4 1280.9 442.8 Q1288.5 467.4 1291.9 492Z" fill="#8fd08a"/><path d="M1270.8 492 Q1269.8 474.9 1267.0 457.9 Q1271.5 474.9 1273.7 492Z" fill="#8fd08a"/><path d="M1268.5 492 Q1261.8 468.4 1245.8 444.7 Q1263.7 468.4 1271.5 492Z" fill="#79c47f"/><path d="M1200.4 492 Q1202.6 479.2 1207.2 466.4 Q1204.7 479.2 1203.9 492Z" fill="#5bb56a"/><path d="M1247.9 492 Q1248.8 478.6 1250.5 465.3 Q1250.8 478.6 1251.2 492Z" fill="#5bb56a"/><path d="M1197.1 492 Q1200.0 467.3 1206.3 442.5 Q1201.7 467.3 1199.9 492Z" fill="#8fd08a"/><path d="M1313.2 492 Q1316.8 478.6 1324.9 465.2 Q1318.4 478.6 1315.8 492Z" fill="#79c47f"/><path d="M1256.9 492 Q1258.3 466.4 1261.2 440.9 Q1259.6 466.4 1259.1 492Z" fill="#79c47f"/><path d="M1295.2 492 Q1302.8 471.8 1320.0 451.6 Q1305.0 471.8 1298.9 492Z" fill="#79c47f"/><path d="M1221.6 492 Q1215.4 479.9 1200.6 467.8 Q1217.1 479.9 1224.4 492Z" fill="#8fd08a"/><path d="M1242.7 492 Q1245.4 467.1 1251.0 442.2 Q1247.5 467.1 1246.3 492Z" fill="#5bb56a"/><path d="M1236.0 492 Q1229.3 470.7 1213.2 449.3 Q1231.0 470.7 1238.8 492Z" fill="#79c47f"/><path d="M1212.3 492 Q1205.5 476.6 1189.3 461.2 Q1207.3 476.6 1215.2 492Z" fill="#5bb56a"/><path d="M1217.6 492 Q1217.3 474.4 1216.2 456.8 Q1218.7 474.4 1220.0 492Z" fill="#8fd08a"/><path d="M1286.6 492 Q1285.5 472.3 1282.2 452.6 Q1287.1 472.3 1289.4 492Z" fill="#79c47f"/><path d="M1196.5 492 Q1204.2 479.0 1221.8 465.9 Q1206.1 479.0 1199.6 492Z" fill="#79c47f"/><path d="M1221.0 492 Q1227.0 471.9 1240.4 451.8 Q1229.0 471.9 1224.3 492Z" fill="#79c47f"/><path d="M1201.9 492 Q1201.4 468.2 1200.0 444.4 Q1202.7 468.2 1203.9 492Z" fill="#8fd08a"/><path d="M1235.4 492 Q1229.4 470.4 1215.2 448.9 Q1230.7 470.4 1237.6 492Z" fill="#8fd08a"/><path d="M1270.9 492 Q1269.5 466.2 1265.9 440.5 Q1271.5 466.2 1274.1 492Z" fill="#79c47f"/><path d="M1308.4 492 Q1310.2 473.3 1313.9 454.5 Q1312.5 473.3 1312.1 492Z" fill="#79c47f"/><path d="M1269.8 492 Q1266.3 470.7 1257.8 449.3 Q1268.3 470.7 1273.0 492Z" fill="#8fd08a"/><path d="M1219.0 492 Q1226.1 477.1 1242.2 462.2 Q1227.5 477.1 1221.4 492Z" fill="#5bb56a"/><path d="M1300.1 492 Q1299.4 475.1 1297.3 458.1 Q1300.7 475.1 1302.3 492Z" fill="#79c47f"/><path d="M1256.6 492 Q1260.7 469.8 1269.9 447.7 Q1262.4 469.8 1259.3 492Z" fill="#5bb56a"/><path d="M1293.2 492 Q1290.6 474.9 1284.0 457.9 Q1292.0 474.9 1295.6 492Z" fill="#8fd08a"/><path d="M1310.7 492 Q1311.0 467.9 1311.3 443.8 Q1313.0 467.9 1314.0 492Z" fill="#8fd08a"/><path d="M1268.7 492 Q1275.4 470.2 1290.7 448.4 Q1276.9 470.2 1271.1 492Z" fill="#79c47f"/><path d="M1205.0 492 Q1201.7 472.2 1193.5 452.3 Q1203.0 472.2 1207.1 492Z" fill="#5bb56a"/><path d="M1239.8 492 Q1234.8 474.6 1222.7 457.2 Q1236.4 474.6 1242.5 492Z" fill="#5bb56a"/><path d="M1311.1 492 Q1314.6 475.9 1322.3 459.7 Q1316.5 475.9 1314.3 492Z" fill="#79c47f"/><path d="M1265.7 492 Q1265.8 479.9 1265.8 467.7 Q1267.5 479.9 1268.4 492Z" fill="#5bb56a"/><path d="M1309.2 492 Q1311.8 466.3 1317.5 440.6 Q1313.6 466.3 1312.1 492Z" fill="#8fd08a"/><path d="M1232.9 492 Q1227.1 468.0 1213.0 444.1 Q1228.9 468.0 1235.8 492Z" fill="#5bb56a"/><path d="M1282.5 492 Q1286.8 479.5 1296.1 467.0 Q1288.8 479.5 1285.9 492Z" fill="#5bb56a"/><path d="M1237.3 492 Q1244.1 476.3 1259.2 460.6 Q1246.3 476.3 1241.0 492Z" fill="#5bb56a"/><path d="M1307.5 492 Q1307.9 466.5 1308.5 440.9 Q1309.1 466.5 1309.5 492Z" fill="#8fd08a"/><path d="M1241.7 492 Q1243.7 474.7 1248.2 457.5 Q1245.0 474.7 1243.8 492Z" fill="#8fd08a"/><path d="M1210.1 492 Q1209.4 457.5 1207.3 423.1 Q1211.1 457.5 1212.9 492Z" fill="#6cc25a"/><path d="M1249.9 492 Q1251.2 461.9 1253.6 431.9 Q1253.1 461.9 1253.2 492Z" fill="#6cc25a"/><path d="M1200.2 492 Q1200.4 464.9 1200.5 437.9 Q1202.0 464.9 1202.8 492Z" fill="#2f9a3e"/><path d="M1254.9 492 Q1261.7 465.2 1277.2 438.4 Q1263.3 465.2 1257.5 492Z" fill="#2f9a3e"/><path d="M1239.4 492 Q1241.8 455.1 1246.6 418.2 Q1243.7 455.1 1242.7 492Z" fill="#58b848"/><path d="M1273.8 492 Q1280.3 461.5 1294.8 431.0 Q1281.9 461.5 1276.6 492Z" fill="#58b848"/><path d="M1219.1 492 Q1224.6 461.3 1236.5 430.5 Q1227.1 461.3 1223.3 492Z" fill="#3aa845"/><path d="M1241.8 492 Q1239.5 464.5 1233.8 437.1 Q1240.9 464.5 1244.1 492Z" fill="#1f7f35"/><path d="M1238.0 492 Q1231.5 471.3 1216.1 450.5 Q1232.8 471.3 1240.1 492Z" fill="#58b848"/><path d="M1292.0 492 Q1292.5 454.4 1292.7 416.9 Q1295.0 454.4 1296.3 492Z" fill="#1f7f35"/><path d="M1240.9 492 Q1244.2 463.2 1251.4 434.4 Q1246.5 463.2 1244.6 492Z" fill="#6cc25a"/><path d="M1248.9 492 Q1242.7 453.6 1227.5 415.2 Q1245.1 453.6 1253.0 492Z" fill="#2f9a3e"/><path d="M1275.6 492 Q1274.1 458.0 1270.1 424.1 Q1276.2 458.0 1279.1 492Z" fill="#6cc25a"/><path d="M1199.2 492 Q1198.9 454.9 1198.0 417.8 Q1200.2 454.9 1201.3 492Z" fill="#58b848"/><path d="M1224.0 492 Q1217.9 455.0 1203.1 418.1 Q1220.0 455.0 1227.5 492Z" fill="#1f7f35"/><path d="M1209.3 492 Q1212.0 463.5 1217.8 435.0 Q1213.7 463.5 1212.2 492Z" fill="#2f9a3e"/><path d="M1276.9 492 Q1277.0 456.3 1276.8 420.6 Q1278.4 456.3 1279.3 492Z" fill="#2f9a3e"/><path d="M1285.1 492 Q1278.6 463.5 1263.1 435.0 Q1280.1 463.5 1287.6 492Z" fill="#58b848"/><path d="M1258.9 492 Q1259.8 472.4 1261.2 452.7 Q1262.5 472.4 1263.3 492Z" fill="#3aa845"/><path d="M1242.9 492 Q1249.5 469.0 1264.4 446.1 Q1250.8 469.0 1245.1 492Z" fill="#1f7f35"/><path d="M1211.1 492 Q1213.8 461.8 1219.5 431.5 Q1216.3 461.8 1215.3 492Z" fill="#1f7f35"/><path d="M1260.4 492 Q1261.2 466.0 1262.5 440.1 Q1263.6 466.0 1264.3 492Z" fill="#58b848"/><path d="M1250.4 492 Q1246.7 466.0 1237.5 440.0 Q1248.9 466.0 1254.1 492Z" fill="#2f9a3e"/><path d="M1220.8 492 Q1228.9 471.3 1247.0 450.7 Q1231.5 471.3 1225.1 492Z" fill="#6cc25a"/><path d="M1310.4 492 Q1307.6 472.0 1300.4 452.1 Q1309.8 472.0 1314.1 492Z" fill="#2f9a3e"/><path d="M1237.1 492 Q1236.9 453.8 1235.8 415.6 Q1238.9 453.8 1240.4 492Z" fill="#58b848"/><path d="M1254.0 492 Q1259.0 452.6 1270.5 413.2 Q1260.3 452.6 1256.1 492Z" fill="#2f9a3e"/><path d="M1217.1 492 Q1221.8 459.2 1232.6 426.4 Q1223.2 459.2 1219.4 492Z" fill="#3aa845"/><path d="M1313.2 492 Q1314.2 471.4 1315.9 450.7 Q1316.3 471.4 1316.8 492Z" fill="#1f7f35"/><path d="M1307.5 492 Q1314.7 462.6 1331.1 433.2 Q1316.1 462.6 1309.8 492Z" fill="#3aa845"/><path d="M1247.7 492 Q1253.4 464.0 1266.0 436.0 Q1255.4 464.0 1251.1 492Z" fill="#3aa845"/><path d="M1257.8 492 Q1259.2 470.1 1262.2 448.3 Q1260.9 470.1 1260.5 492Z" fill="#1f7f35"/><path d="M1308.3 492 Q1310.5 470.7 1315.2 449.4 Q1312.2 470.7 1311.1 492Z" fill="#3aa845"/><path d="M1310.1 492 Q1311.7 463.3 1315.0 434.5 Q1313.1 463.3 1312.5 492Z" fill="#6cc25a"/><path d="M1209.7 492 Q1208.5 452.1 1205.2 412.2 Q1210.5 452.1 1213.0 492Z" fill="#2f9a3e"/><path d="M1256.7 492 Q1261.9 460.6 1273.4 429.2 Q1263.9 460.6 1260.0 492Z" fill="#1f7f35"/><path d="M1207.4 492 Q1214.4 455.6 1230.4 419.2 Q1216.3 455.6 1210.5 492Z" fill="#1f7f35"/><path d="M1228.0 492 Q1223.0 462.2 1210.8 432.3 Q1224.8 462.2 1231.0 492Z" fill="#1f7f35"/><path d="M1258.4 492 Q1257.6 454.3 1255.4 416.7 Q1258.8 454.3 1260.5 492Z" fill="#58b848"/><path d="M1211.9 492 Q1205.2 468.8 1189.3 445.5 Q1206.7 468.8 1214.4 492Z" fill="#3aa845"/><path d="M1198.1 492 Q1202.0 458.1 1210.6 424.2 Q1203.5 458.1 1200.7 492Z" fill="#1f7f35"/><path d="M1208.7 492 Q1203.6 467.7 1191.4 443.4 Q1205.6 467.7 1211.9 492Z" fill="#58b848"/><path d="M1280.9 492 Q1287.0 467.1 1300.9 442.2 Q1288.3 467.1 1283.0 492Z" fill="#1f7f35"/><path d="M1292.5 492 Q1293.9 465.2 1296.5 438.5 Q1296.3 465.2 1296.6 492Z" fill="#6cc25a"/><path d="M1271.0 492 Q1276.9 463.4 1290.3 434.8 Q1279.0 463.4 1274.4 492Z" fill="#3aa845"/><path d="M1223.1 492 Q1228.6 467.9 1240.7 443.9 Q1231.1 467.9 1227.3 492Z" fill="#58b848"/><path d="M1266.6 492 Q1262.8 471.1 1253.3 450.3 Q1265.1 471.1 1270.5 492Z" fill="#3aa845"/><path d="M1300.0 492 Q1296.8 454.9 1288.8 417.8 Q1299.1 454.9 1303.7 492Z" fill="#58b848"/><path d="M1241.7 492 Q1249.0 461.3 1265.4 430.7 Q1251.0 461.3 1245.0 492Z" fill="#3aa845"/><path d="M1220.4 492 Q1225.3 465.5 1236.4 439.0 Q1226.6 465.5 1222.6 492Z" fill="#6cc25a"/><use href="#tulipR" transform="translate(1247,437) rotate(-5) scale(0.8)"/><use href="#tulipR" transform="translate(1205,458) rotate(-10) scale(0.65)"/><use href="#tulipR" transform="translate(1291,462) rotate(5) scale(0.65)"/><use href="#tulipP" transform="translate(1218,457) scale(0.7)"/><use href="#tulipP" transform="translate(1274,470) scale(0.7)"/><use href="#daff" transform="translate(1221,437) scale(0.8)"/><use href="#daff" transform="translate(1295,451) scale(0.75)"/><use href="#bfly" transform="translate(1267,437) rotate(10) scale(0.85)"/><use href="#bfly" transform="translate(1242,484) rotate(-10) scale(0.7)"/><use href="#bflyO" transform="translate(1237,430) rotate(30) scale(0.7)"/><use href="#bflyO" transform="translate(1288,478) rotate(30) scale(0.65)"/><use href="#daisy" transform="translate(1263,455) scale(0.8)"/><use href="#daisy" transform="translate(1284,488) scale(0.7)"/><use href="#bug" transform="translate(1282,433) scale(0.7)"/><use href="#bug" transform="translate(1223,472) scale(0.6)"/><use href="#star" transform="translate(1247,460) scale(0.8)"/><use href="#star" transform="translate(1241,473) scale(0.8)"/><use href="#star" transform="translate(1274,487) scale(0.8)"/><use href="#star" transform="translate(1306,482) scale(0.8)"/><use href="#wfl" transform="translate(1260,476) scale(0.8)"/><use href="#wfl" transform="translate(1260,487) scale(0.8)"/><use href="#wfl" transform="translate(1297,490) scale(0.8)"/><use href="#wfl" transform="translate(1225,490) scale(0.8)"/></g><g transform="translate(2538.7,118.3) scale(-1,1)"><clipPath id="pc1"><path d="M1198 469.5 L1198 428 C1201 424 1205 414 1209.6 398 C1213 410 1216 418 1222 423 C1228 420 1235 414 1242 412 C1248 416 1253 419 1260 412 C1266 416 1272 421 1280 414 C1286 418 1292 419 1297 424 C1302 430 1308 440 1314.7 446 L1314.7 492 L1232 492 L1232 469.5Z"/></clipPath><path d="M1198 469.5 L1198 428 C1201 424 1205 414 1209.6 398 C1213 410 1216 418 1222 423 C1228 420 1235 414 1242 412 C1248 416 1253 419 1260 412 C1266 416 1272 421 1280 414 C1286 418 1292 419 1297 424 C1302 430 1308 440 1314.7 446 L1314.7 492 L1232 492 L1232 469.5Z" fill="url(#patchTop)"/><g clip-path="url(#pc1)"><path d="M1209.6 398 C1205 415 1203 435 1204 455 L1216 455 C1217 435 1214 415 1209.6 398Z" fill="#9fd3ea" filter="url(#soft)"/><path d="M1198 440 C1205 430 1215 428 1232 432 L1232 450 L1198 450Z" fill="#8fcf8a" opacity="0.7"/><path d="M1226.5 492 Q1230.0 476.3 1237.5 460.6 Q1232.2 476.3 1230.2 492Z" fill="#79c47f"/><path d="M1272.6 492 Q1278.8 476.0 1292.7 460.0 Q1280.8 476.0 1275.9 492Z" fill="#79c47f"/><path d="M1211.9 492 Q1208.2 474.0 1198.9 455.9 Q1209.7 474.0 1214.5 492Z" fill="#5bb56a"/><path d="M1210.8 492 Q1219.1 476.3 1237.7 460.5 Q1221.4 476.3 1214.8 492Z" fill="#79c47f"/><path d="M1206.7 492 Q1213.0 477.9 1227.4 463.8 Q1214.5 477.9 1209.2 492Z" fill="#5bb56a"/><path d="M1283.9 492 Q1288.8 480.2 1299.8 468.5 Q1290.3 480.2 1286.4 492Z" fill="#79c47f"/><path d="M1253.5 492 Q1255.1 477.3 1258.2 462.7 Q1256.8 477.3 1256.4 492Z" fill="#5bb56a"/><path d="M1300.6 492 Q1303.5 475.6 1309.7 459.2 Q1305.1 475.6 1303.3 492Z" fill="#8fd08a"/><path d="M1289.8 492 Q1293.3 480.8 1300.9 469.6 Q1295.2 480.8 1293.0 492Z" fill="#8fd08a"/><path d="M1312.0 492 Q1316.0 472.6 1324.9 453.2 Q1317.9 472.6 1315.0 492Z" fill="#5bb56a"/><path d="M1220.2 492 Q1217.1 473.8 1209.4 455.7 Q1218.9 473.8 1223.2 492Z" fill="#8fd08a"/><path d="M1229.2 492 Q1231.0 479.3 1234.6 466.7 Q1232.9 479.3 1232.3 492Z" fill="#8fd08a"/><path d="M1224.5 492 Q1222.9 468.9 1218.9 445.8 Q1224.2 468.9 1226.6 492Z" fill="#8fd08a"/><path d="M1270.2 492 Q1263.3 473.0 1246.7 453.9 Q1265.0 473.0 1273.0 492Z" fill="#79c47f"/><path d="M1222.9 492 Q1226.4 473.5 1234.2 454.9 Q1228.2 473.5 1225.8 492Z" fill="#5bb56a"/><path d="M1214.8 492 Q1221.1 472.2 1235.1 452.4 Q1223.3 472.2 1218.6 492Z" fill="#5bb56a"/><path d="M1220.0 492 Q1218.8 478.8 1215.5 465.6 Q1220.9 478.8 1223.5 492Z" fill="#79c47f"/><path d="M1302.0 492 Q1298.6 476.6 1290.4 461.1 Q1300.4 476.6 1305.0 492Z" fill="#8fd08a"/><path d="M1201.4 492 Q1195.1 476.5 1179.9 461.1 Q1197.0 476.5 1204.6 492Z" fill="#8fd08a"/><path d="M1236.3 492 Q1231.9 470.4 1221.2 448.9 Q1233.9 470.4 1239.6 492Z" fill="#79c47f"/><path d="M1301.8 492 Q1301.4 468.5 1299.8 445.0 Q1303.3 468.5 1305.0 492Z" fill="#8fd08a"/><path d="M1277.7 492 Q1283.2 480.6 1295.6 469.1 Q1285.2 480.6 1281.0 492Z" fill="#8fd08a"/><path d="M1197.0 492 Q1191.9 481.0 1179.4 469.9 Q1193.5 481.0 1199.6 492Z" fill="#5bb56a"/><path d="M1262.6 492 Q1269.8 476.5 1286.0 461.0 Q1271.6 476.5 1265.6 492Z" fill="#79c47f"/><path d="M1196.7 492 Q1197.4 471.0 1198.5 450.0 Q1199.8 471.0 1200.6 492Z" fill="#8fd08a"/><path d="M1292.6 492 Q1289.0 469.3 1279.8 446.7 Q1291.1 469.3 1296.2 492Z" fill="#5bb56a"/><path d="M1255.4 492 Q1259.5 479.7 1268.6 467.3 Q1261.0 479.7 1257.9 492Z" fill="#8fd08a"/><path d="M1293.2 492 Q1292.6 469.2 1290.7 446.5 Q1294.0 469.2 1295.7 492Z" fill="#79c47f"/><path d="M1265.8 492 Q1268.5 472.4 1274.3 452.8 Q1270.2 472.4 1268.7 492Z" fill="#5bb56a"/><path d="M1242.9 492 Q1247.4 467.3 1257.4 442.6 Q1249.4 467.3 1246.1 492Z" fill="#79c47f"/><path d="M1272.4 492 Q1272.5 470.6 1271.9 449.2 Q1274.9 470.6 1276.4 492Z" fill="#5bb56a"/><path d="M1235.8 492 Q1235.3 470.3 1233.7 448.7 Q1236.7 470.3 1238.1 492Z" fill="#79c47f"/><path d="M1209.8 492 Q1206.1 478.4 1197.0 464.7 Q1207.7 478.4 1212.4 492Z" fill="#5bb56a"/><path d="M1230.5 492 Q1225.1 471.2 1212.0 450.4 Q1226.9 471.2 1233.5 492Z" fill="#8fd08a"/><path d="M1299.0 492 Q1292.8 480.8 1277.7 469.7 Q1294.6 480.8 1302.1 492Z" fill="#79c47f"/><path d="M1309.3 492 Q1305.1 466.7 1294.5 441.5 Q1307.3 466.7 1313.1 492Z" fill="#8fd08a"/><path d="M1210.8 492 Q1207.8 466.1 1200.1 440.1 Q1210.0 466.1 1214.6 492Z" fill="#79c47f"/><path d="M1207.2 492 Q1201.3 480.0 1187.0 468.0 Q1202.8 480.0 1209.8 492Z" fill="#79c47f"/><path d="M1202.3 492 Q1207.7 469.6 1219.9 447.1 Q1209.2 469.6 1204.7 492Z" fill="#5bb56a"/><path d="M1219.3 492 Q1213.2 471.9 1198.5 451.8 Q1215.1 471.9 1222.4 492Z" fill="#79c47f"/><path d="M1209.5 492 Q1210.8 454.9 1213.2 417.9 Q1213.2 454.9 1213.5 492Z" fill="#6cc25a"/><path d="M1243.1 492 Q1244.3 455.2 1246.7 418.4 Q1245.9 455.2 1245.7 492Z" fill="#58b848"/><path d="M1203.0 492 Q1206.8 452.7 1215.4 413.3 Q1208.2 452.7 1205.2 492Z" fill="#58b848"/><path d="M1297.9 492 Q1303.1 473.5 1314.8 455.0 Q1304.9 473.5 1300.9 492Z" fill="#6cc25a"/><path d="M1310.5 492 Q1314.3 466.5 1322.6 441.0 Q1316.8 466.5 1314.7 492Z" fill="#2f9a3e"/><path d="M1209.2 492 Q1217.3 458.6 1235.6 425.3 Q1219.2 458.6 1212.4 492Z" fill="#58b848"/><path d="M1214.0 492 Q1211.7 455.2 1205.7 418.4 Q1213.6 455.2 1217.3 492Z" fill="#6cc25a"/><path d="M1227.0 492 Q1234.1 459.1 1250.2 426.3 Q1235.6 459.1 1229.6 492Z" fill="#58b848"/><path d="M1245.1 492 Q1249.7 473.4 1259.8 454.7 Q1251.6 473.4 1248.3 492Z" fill="#58b848"/><path d="M1214.6 492 Q1222.1 464.4 1239.0 436.9 Q1223.9 464.4 1217.7 492Z" fill="#1f7f35"/><path d="M1279.5 492 Q1273.2 469.9 1258.0 447.8 Q1275.7 469.9 1283.6 492Z" fill="#1f7f35"/><path d="M1292.4 492 Q1287.1 455.8 1274.2 419.7 Q1289.2 455.8 1295.8 492Z" fill="#58b848"/><path d="M1205.6 492 Q1207.4 471.4 1211.0 450.9 Q1209.6 471.4 1209.3 492Z" fill="#2f9a3e"/><path d="M1221.6 492 Q1224.4 468.0 1230.5 444.0 Q1226.2 468.0 1224.6 492Z" fill="#6cc25a"/><path d="M1198.6 492 Q1194.0 470.5 1182.7 449.1 Q1196.4 470.5 1202.6 492Z" fill="#3aa845"/><path d="M1272.2 492 Q1271.9 467.7 1270.5 443.5 Q1274.2 467.7 1276.0 492Z" fill="#3aa845"/><path d="M1253.3 492 Q1250.1 465.1 1242.1 438.1 Q1252.1 465.1 1256.6 492Z" fill="#2f9a3e"/><path d="M1263.1 492 Q1269.9 471.2 1285.2 450.4 Q1272.0 471.2 1266.6 492Z" fill="#6cc25a"/><path d="M1201.8 492 Q1201.6 467.1 1200.3 442.1 Q1204.1 467.1 1206.0 492Z" fill="#2f9a3e"/><path d="M1207.8 492 Q1215.0 471.7 1231.3 451.3 Q1217.4 471.7 1211.7 492Z" fill="#3aa845"/><path d="M1276.0 492 Q1279.2 467.5 1286.1 443.0 Q1281.3 467.5 1279.4 492Z" fill="#58b848"/><path d="M1280.3 492 Q1275.9 454.7 1265.3 417.4 Q1277.3 454.7 1282.5 492Z" fill="#6cc25a"/><path d="M1271.1 492 Q1272.1 465.1 1273.7 438.2 Q1274.4 465.1 1275.0 492Z" fill="#58b848"/><path d="M1240.9 492 Q1241.6 469.5 1242.6 447.0 Q1243.6 469.5 1244.3 492Z" fill="#1f7f35"/><path d="M1204.5 492 Q1205.5 470.5 1207.2 448.9 Q1207.1 470.5 1207.2 492Z" fill="#1f7f35"/><path d="M1275.2 492 Q1278.5 471.6 1285.8 451.2 Q1280.3 471.6 1278.1 492Z" fill="#2f9a3e"/><path d="M1285.5 492 Q1283.3 472.0 1277.6 452.1 Q1285.9 472.0 1289.7 492Z" fill="#2f9a3e"/><path d="M1311.7 492 Q1311.0 461.6 1308.9 431.3 Q1313.0 461.6 1315.1 492Z" fill="#2f9a3e"/><path d="M1206.0 492 Q1201.2 456.6 1189.6 421.3 Q1202.9 456.6 1208.7 492Z" fill="#58b848"/><path d="M1294.6 492 Q1294.3 463.4 1292.9 434.8 Q1296.3 463.4 1298.0 492Z" fill="#2f9a3e"/><path d="M1220.7 492 Q1215.0 472.9 1201.3 453.9 Q1216.4 472.9 1223.0 492Z" fill="#3aa845"/><path d="M1308.5 492 Q1310.9 463.9 1316.2 435.8 Q1312.6 463.9 1311.2 492Z" fill="#2f9a3e"/><path d="M1215.2 492 Q1209.1 456.0 1194.5 420.0 Q1211.0 456.0 1218.2 492Z" fill="#3aa845"/><path d="M1273.2 492 Q1277.0 467.2 1285.2 442.5 Q1279.3 467.2 1277.1 492Z" fill="#6cc25a"/><path d="M1214.5 492 Q1217.0 453.2 1222.2 414.3 Q1218.9 453.2 1217.8 492Z" fill="#6cc25a"/><path d="M1287.2 492 Q1281.8 468.1 1268.7 444.2 Q1284.1 468.1 1291.0 492Z" fill="#58b848"/><path d="M1245.6 492 Q1243.0 457.3 1236.4 422.5 Q1245.1 457.3 1249.0 492Z" fill="#6cc25a"/><path d="M1245.6 492 Q1249.8 458.1 1259.0 424.2 Q1251.3 458.1 1248.1 492Z" fill="#2f9a3e"/><path d="M1215.5 492 Q1223.0 470.4 1240.1 448.9 Q1224.6 470.4 1218.1 492Z" fill="#3aa845"/><path d="M1269.4 492 Q1269.9 454.2 1270.7 416.3 Q1272.0 454.2 1272.8 492Z" fill="#2f9a3e"/><path d="M1278.6 492 Q1278.1 464.4 1276.4 436.7 Q1280.3 464.4 1282.3 492Z" fill="#3aa845"/><path d="M1252.1 492 Q1247.2 470.1 1235.2 448.2 Q1249.4 470.1 1255.8 492Z" fill="#1f7f35"/><path d="M1206.3 492 Q1211.6 454.2 1223.2 416.3 Q1214.0 454.2 1210.3 492Z" fill="#1f7f35"/><path d="M1198.0 492 Q1201.8 471.8 1210.1 451.6 Q1203.9 471.8 1201.5 492Z" fill="#3aa845"/><path d="M1225.5 492 Q1232.0 455.2 1246.8 418.5 Q1233.2 455.2 1227.5 492Z" fill="#58b848"/><path d="M1235.3 492 Q1231.1 459.5 1221.1 427.0 Q1232.5 459.5 1237.6 492Z" fill="#3aa845"/><path d="M1262.0 492 Q1269.4 465.5 1286.1 439.1 Q1271.7 465.5 1265.9 492Z" fill="#6cc25a"/><path d="M1247.3 492 Q1246.5 454.6 1244.1 417.3 Q1248.0 454.6 1249.8 492Z" fill="#3aa845"/><path d="M1268.5 492 Q1262.1 460.1 1246.5 428.2 Q1264.4 460.1 1272.4 492Z" fill="#58b848"/><path d="M1303.4 492 Q1297.6 460.6 1283.7 429.2 Q1299.2 460.6 1306.0 492Z" fill="#3aa845"/><use href="#tulipR" transform="translate(1247,437) rotate(-5) scale(0.8)"/><use href="#tulipR" transform="translate(1205,458) rotate(-10) scale(0.65)"/><use href="#tulipR" transform="translate(1291,462) rotate(5) scale(0.65)"/><use href="#tulipP" transform="translate(1218,457) scale(0.7)"/><use href="#tulipP" transform="translate(1274,470) scale(0.7)"/><use href="#daff" transform="translate(1221,437) scale(0.8)"/><use href="#daff" transform="translate(1295,451) scale(0.75)"/><use href="#bfly" transform="translate(1267,437) rotate(10) scale(0.85)"/><use href="#bfly" transform="translate(1242,484) rotate(-10) scale(0.7)"/><use href="#bflyO" transform="translate(1237,430) rotate(30) scale(0.7)"/><use href="#bflyO" transform="translate(1288,478) rotate(30) scale(0.65)"/><use href="#daisy" transform="translate(1263,455) scale(0.8)"/><use href="#daisy" transform="translate(1284,488) scale(0.7)"/><use href="#bug" transform="translate(1282,433) scale(0.7)"/><use href="#bug" transform="translate(1223,472) scale(0.6)"/><use href="#star" transform="translate(1247,460) scale(0.8)"/><use href="#star" transform="translate(1241,473) scale(0.8)"/><use href="#star" transform="translate(1274,487) scale(0.8)"/><use href="#star" transform="translate(1306,482) scale(0.8)"/><use href="#wfl" transform="translate(1260,476) scale(0.8)"/><use href="#wfl" transform="translate(1260,487) scale(0.8)"/><use href="#wfl" transform="translate(1297,490) scale(0.8)"/><use href="#wfl" transform="translate(1225,490) scale(0.8)"/></g></g><g transform="translate(0,0)"><path d="M1135.3 533.7 L1135.5 527.0 L1137.0 522.0 L1137.0 515.8 L1139.6 518.9 L1142.5 513.5 L1145.4 515.5 L1147.6 511.7 L1150.1 514.3 L1151.8 508.8 L1153.6 512.0 L1156.0 507.8 L1157.8 511.5 L1160.7 509.3 L1162.4 512.2 L1164.1 509.0 L1165.8 511.2 L1168.6 508.2 L1170.4 512.4 L1173.3 508.4 L1176.2 511.8 L1178.7 508.2 L1181.6 512.0 L1184.6 509.6 L1186.5 511.6 L1188.3 508.1 L1189.9 511.6 L1192.3 507.8 L1194.8 511.6 L1196.8 509.4 L1199.0 511.6 L1201.2 509.2 L1202.8 512.4 L1204.3 509.3 L1207.1 511.2 L1209.8 508.5 L1212.1 511.2 L1213.7 508.2 L1216.6 511.4 L1219.3 509.7 L1222.2 511.6 L1224.2 508.8 L1226.9 511.3 L1229.5 509.4 L1232.3 511.2 L1233.0 516.0 L1234.7 524.0 L1234.7 533.7Z" fill="#3e7f33"/><path d="M1136 526 C1150 523 1170 524 1180 527 L1180 533.7 L1136 533.7Z" fill="#5fc46c"/><path d="M1176 533 C1170 525 1172 513 1190 512 C1206 511 1218 516 1218 525 C1218 531 1206 533.7 1195 533.7Z" fill="#6aa942"/><path d="M1145 522 C1150 514 1162 513 1172 516 C1168 522 1156 525 1145 522Z" fill="#629f3e"/><path d="M1205 533.7 C1215 530 1226 529 1234.7 530 L1234.7 533.7Z" fill="#5ec46e"/><circle cx="1148.4" cy="518.1" r="1.7" fill="#2f6a28"/><circle cx="1171.3" cy="528.6" r="1.7" fill="#7cb84e"/><circle cx="1203.1" cy="517.5" r="2.0" fill="#4e9a3a"/><circle cx="1153.7" cy="524.4" r="2.2" fill="#2f6a28"/><circle cx="1206.3" cy="513.5" r="1.7" fill="#7cb84e"/><circle cx="1142.9" cy="525.3" r="1.4" fill="#7cb84e"/><circle cx="1181.9" cy="519.6" r="1.1" fill="#4e9a3a"/><circle cx="1143.0" cy="520.9" r="2.0" fill="#2f6a28"/><circle cx="1230.3" cy="522.2" r="1.2" fill="#7cb84e"/><circle cx="1149.8" cy="519.8" r="1.2" fill="#7cb84e"/><circle cx="1167.1" cy="520.2" r="2.2" fill="#2f6a28"/><circle cx="1229.8" cy="520.2" r="1.6" fill="#4e9a3a"/><circle cx="1169.2" cy="516.9" r="1.6" fill="#2f6a28"/><circle cx="1150.4" cy="526.8" r="1.6" fill="#2f6a28"/><circle cx="1197.7" cy="521.0" r="1.4" fill="#2f6a28"/><circle cx="1185.3" cy="521.3" r="1.7" fill="#4e9a3a"/><circle cx="1173.2" cy="526.1" r="1.9" fill="#4e9a3a"/><circle cx="1194.0" cy="512.6" r="1.4" fill="#4e9a3a"/><circle cx="1204.8" cy="517.1" r="1.6" fill="#4e9a3a"/><circle cx="1205.9" cy="529.2" r="1.4" fill="#2f6a28"/><circle cx="1193.4" cy="512.2" r="1.7" fill="#7cb84e"/><circle cx="1170.0" cy="516.9" r="1.3" fill="#4e9a3a"/><circle cx="1199.6" cy="526.4" r="1.4" fill="#4e9a3a"/><circle cx="1171.8" cy="528.9" r="1.5" fill="#2f6a28"/><circle cx="1220.0" cy="524.4" r="2.2" fill="#7cb84e"/><circle cx="1187.7" cy="521.5" r="1.2" fill="#7cb84e"/><circle cx="1226.2" cy="520.6" r="1.8" fill="#4e9a3a"/><circle cx="1201.7" cy="519.5" r="1.7" fill="#4e9a3a"/><circle cx="1187.5" cy="528.9" r="1.4" fill="#4e9a3a"/><circle cx="1211.3" cy="523.5" r="1.9" fill="#2f6a28"/><use href="#star" transform="translate(1194,514)"/><use href="#star" transform="translate(1155,522) scale(0.8)"/><use href="#star" transform="translate(1228,519) scale(0.7)"/><use href="#star" transform="translate(1198,522) scale(0.8)"/><use href="#wfl" transform="translate(1202,519)"/><use href="#wfl" transform="translate(1207,526) scale(0.9)"/><use href="#wfl" transform="translate(1166,520) scale(0.8)"/><use href="#wfl" transform="translate(1150,514) scale(0.7)"/><use href="#wfl" transform="translate(1224,512) scale(0.6)"/><use href="#bug" transform="translate(1183,516) scale(0.8)"/><use href="#bug" transform="translate(1220,524) scale(0.7)"/></g><g transform="translate(-110.3,62)"><path d="M1135.3 533.7 L1135.5 527.0 L1137.0 522.0 L1137.0 515.8 L1139.6 518.9 L1142.5 513.5 L1145.4 515.5 L1147.6 511.7 L1150.1 514.3 L1151.8 508.8 L1153.6 512.0 L1156.0 507.8 L1157.8 511.5 L1160.7 509.3 L1162.4 512.2 L1164.1 509.0 L1165.8 511.2 L1168.6 508.2 L1170.4 512.4 L1173.3 508.4 L1176.2 511.8 L1178.7 508.2 L1181.6 512.0 L1184.6 509.6 L1186.5 511.6 L1188.3 508.1 L1189.9 511.6 L1192.3 507.8 L1194.8 511.6 L1196.8 509.4 L1199.0 511.6 L1201.2 509.2 L1202.8 512.4 L1204.3 509.3 L1207.1 511.2 L1209.8 508.5 L1212.1 511.2 L1213.7 508.2 L1216.6 511.4 L1219.3 509.7 L1222.2 511.6 L1224.2 508.8 L1226.9 511.3 L1229.5 509.4 L1232.3 511.2 L1233.0 516.0 L1234.7 524.0 L1234.7 533.7Z" fill="#3e7f33"/><path d="M1136 526 C1150 523 1170 524 1180 527 L1180 533.7 L1136 533.7Z" fill="#5fc46c"/><path d="M1176 533 C1170 525 1172 513 1190 512 C1206 511 1218 516 1218 525 C1218 531 1206 533.7 1195 533.7Z" fill="#6aa942"/><path d="M1145 522 C1150 514 1162 513 1172 516 C1168 522 1156 525 1145 522Z" fill="#629f3e"/><path d="M1205 533.7 C1215 530 1226 529 1234.7 530 L1234.7 533.7Z" fill="#5ec46e"/><circle cx="1148.4" cy="518.1" r="1.7" fill="#2f6a28"/><circle cx="1171.3" cy="528.6" r="1.7" fill="#7cb84e"/><circle cx="1203.1" cy="517.5" r="2.0" fill="#4e9a3a"/><circle cx="1153.7" cy="524.4" r="2.2" fill="#2f6a28"/><circle cx="1206.3" cy="513.5" r="1.7" fill="#7cb84e"/><circle cx="1142.9" cy="525.3" r="1.4" fill="#7cb84e"/><circle cx="1181.9" cy="519.6" r="1.1" fill="#4e9a3a"/><circle cx="1143.0" cy="520.9" r="2.0" fill="#2f6a28"/><circle cx="1230.3" cy="522.2" r="1.2" fill="#7cb84e"/><circle cx="1149.8" cy="519.8" r="1.2" fill="#7cb84e"/><circle cx="1167.1" cy="520.2" r="2.2" fill="#2f6a28"/><circle cx="1229.8" cy="520.2" r="1.6" fill="#4e9a3a"/><circle cx="1169.2" cy="516.9" r="1.6" fill="#2f6a28"/><circle cx="1150.4" cy="526.8" r="1.6" fill="#2f6a28"/><circle cx="1197.7" cy="521.0" r="1.4" fill="#2f6a28"/><circle cx="1185.3" cy="521.3" r="1.7" fill="#4e9a3a"/><circle cx="1173.2" cy="526.1" r="1.9" fill="#4e9a3a"/><circle cx="1194.0" cy="512.6" r="1.4" fill="#4e9a3a"/><circle cx="1204.8" cy="517.1" r="1.6" fill="#4e9a3a"/><circle cx="1205.9" cy="529.2" r="1.4" fill="#2f6a28"/><circle cx="1193.4" cy="512.2" r="1.7" fill="#7cb84e"/><circle cx="1170.0" cy="516.9" r="1.3" fill="#4e9a3a"/><circle cx="1199.6" cy="526.4" r="1.4" fill="#4e9a3a"/><circle cx="1171.8" cy="528.9" r="1.5" fill="#2f6a28"/><circle cx="1220.0" cy="524.4" r="2.2" fill="#7cb84e"/><circle cx="1187.7" cy="521.5" r="1.2" fill="#7cb84e"/><circle cx="1226.2" cy="520.6" r="1.8" fill="#4e9a3a"/><circle cx="1201.7" cy="519.5" r="1.7" fill="#4e9a3a"/><circle cx="1187.5" cy="528.9" r="1.4" fill="#4e9a3a"/><circle cx="1211.3" cy="523.5" r="1.9" fill="#2f6a28"/><use href="#star" transform="translate(1194,514)"/><use href="#star" transform="translate(1155,522) scale(0.8)"/><use href="#star" transform="translate(1228,519) scale(0.7)"/><use href="#star" transform="translate(1198,522) scale(0.8)"/><use href="#wfl" transform="translate(1202,519)"/><use href="#wfl" transform="translate(1207,526) scale(0.9)"/><use href="#wfl" transform="translate(1166,520) scale(0.8)"/><use href="#wfl" transform="translate(1150,514) scale(0.7)"/><use href="#wfl" transform="translate(1224,512) scale(0.6)"/><use href="#bug" transform="translate(1183,516) scale(0.8)"/><use href="#bug" transform="translate(1220,524) scale(0.7)"/></g></svg>
<div class="a" style="left:1434px;top:86px;width:15px;height:804px;background:#f1f1f1"></div><svg class="a" style="left:1437px;top:90px" width="9" height="6"><path d="M0.5 5H8.5L4.5 0.5Z" fill="#999"/></svg><div class="a" style="left:1436px;top:101px;width:10.5px;height:38.5px;background:#c1c1c1"></div><svg class="a" style="left:1437px;top:879px" width="9" height="6"><path d="M0.5 0.5H8.5L4.5 5Z" fill="#666"/></svg><div class="a" style="left:59px;top:890px;width:1390px;height:10px;background:#f1f1f1"></div><div class="a" style="left:74.3px;top:892px;width:115.5px;height:8px;background:#c1c1c1"></div><svg class="a" style="left:63px;top:892px" width="6" height="9"><path d="M5 0.5V8.5L0.5 4.5Z" fill="#777"/></svg><svg class="a" style="left:1424px;top:892px" width="6" height="9"><path d="M0.5 0.5V8.5L5 4.5Z" fill="#555"/></svg><div class="a" style="left:88px;top:853.8px;width:94px;height:28.2px;border-radius:14px;background:#f3f3f3"></div><svg class="a" style="left:92px;top:858px" width="88" height="20"><circle cx="10" cy="10" r="8" fill="none" stroke="#cfcfcf" stroke-width="1.3"/><path d="M5.5 10H14.5" stroke="#cfcfcf" stroke-width="1.5"/><circle cx="75.5" cy="10" r="8" fill="none" stroke="#cfcfcf" stroke-width="1.3"/><path d="M71 10H80M75.5 5.5V14.5" stroke="#cfcfcf" stroke-width="1.3"/></svg><div class="t" style="left:117px;top:859px;font-size:17px;color:#c9c9c9;">75%</div>
<div class="a" style="left:1449px;top:42px;width:228px;height:858px;background:#f2f2f2"></div><div class="a" style="left:1449px;top:42px;width:228px;height:19.5px;background:#e5e5e5"></div><div class="a" style="left:1449px;top:60px;width:228px;height:1.3px;background:#d2d2d2"></div><div class="a" style="left:1449px;top:59.6px;width:113px;height:2px;background:#8c8c8c"></div><div class="t" style="left:1490px;top:45.5px;font-size:10.5px;color:#555;">Layers</div><div class="t" style="left:1592.4px;top:45.5px;font-size:10.5px;color:#555;">Color Sync</div><div class="a" style="left:1449px;top:61.3px;width:228px;height:45.5px;background:#dddddd"></div><div class="a" style="left:1449px;top:106px;width:228px;height:1px;background:#d0d0d0"></div><svg class="a" style="left:1465px;top:66px" width="19" height="16"><rect x="1.5" y="1.5" width="15" height="12" fill="none" stroke="#b9b9b9" stroke-width="1.1"/><rect x="4" y="4" width="7" height="5" fill="none" stroke="#b9b9b9" stroke-width="1"/><rect x="8" y="7" width="6" height="4.5" fill="none" stroke="#b9b9b9" stroke-width="1"/></svg><svg class="a" style="left:1522px;top:67px" width="17" height="16"><path d="M2 1V7M1 3H5M5 4H15V14H5Z" fill="none" stroke="#b9b9b9" stroke-width="1.1" stroke-dasharray="2 1"/></svg><svg class="a" style="left:1586px;top:67px" width="15" height="17"><rect x="1" y="3" width="10" height="12" fill="none" stroke="#444" stroke-width="1.1"/><rect x="4" y="1" width="10" height="12" fill="#ddd" stroke="#444" stroke-width="1.1"/><path d="M9 4 L10 6.5 L12.5 6.7 L10.5 8.3 L11.2 10.8 L9 9.4 L6.8 10.8 L7.5 8.3 L5.5 6.7 L8 6.5Z" fill="none" stroke="#444" stroke-width="0.8"/></svg><svg class="a" style="left:1643px;top:67px" width="15" height="17"><path d="M1.5 3.5H13.5M5 3.5V1.5H10V3.5M3 3.5V15.5H12V3.5" fill="none" stroke="#777" stroke-width="1.1"/><path d="M5.8 6.5V12.5M7.5 6.5V12.5M9.2 6.5V12.5" stroke="#777" stroke-width="0.9"/></svg><div class="t" style="left:1461.5px;top:87.3px;font-size:9.5px;color:#bdbdbd;letter-spacing:-0.2px">Group</div><div class="t" style="left:1512px;top:87.3px;font-size:9.5px;color:#bdbdbd;letter-spacing:-0.2px">UnGroup</div><div class="t" style="left:1573.8px;top:87.8px;font-size:9.5px;color:#333;letter-spacing:-0.25px">Duplicate</div><div class="t" style="left:1637.4px;top:87.8px;font-size:9.5px;color:#333;letter-spacing:-0.2px">Delete</div><div class="a" style="left:1449px;top:266px;width:212px;height:225px;background:#e0e0e0"></div><div class="a" style="left:1449px;top:265.5px;width:212px;height:1.2px;background:#c9c9c9"></div><div class="a" style="left:1449px;top:490.5px;width:212px;height:1.2px;background:#d0d0d0"></div><div class="a" style="left:1661px;top:107px;width:16px;height:700px;background:#f0f0f0"></div><div class="a" style="left:1675px;top:42px;width:1px;height:858px;background:#f4f4f4"></div><div class="a" style="left:1676px;top:0;width:1px;height:900px;background:#111"></div><svg class="a" style="left:1664px;top:112px" width="9" height="6"><path d="M0.5 5H8.5L4.5 0.5Z" fill="#bbb"/></svg><svg class="a" style="left:1664px;top:806px" width="9" height="6"><path d="M0.5 0.5H8.5L4.5 5Z" fill="#aaa"/></svg><div class="a" style="left:1473px;top:132.5px;width:188px;height:1px;background:#b4b4b4"></div><div class="a" style="left:1473px;top:198.5px;width:188px;height:1px;background:#b4b4b4"></div><div class="a" style="left:1473px;top:292.3px;width:188px;height:1px;background:#b4b4b4"></div><div class="a" style="left:1473px;top:358.8px;width:188px;height:1px;background:#b4b4b4"></div><div class="a" style="left:1473px;top:424.1px;width:188px;height:1px;background:#b4b4b4"></div><div class="t" style="left:1474px;top:112.7px;font-size:14.5px;color:#2a2a2a;">Attach</div><svg class="a" style="left:1457px;top:118.8px" width="8" height="5"><path d="M0 0H7.5L3.75 4.5Z" fill="#222"/></svg><svg class="a" style="left:1635.5px;top:116.3px" width="14" height="10"><path d="M1 5 C3 1.2 11 1.2 13 5 C11 8.8 3 8.8 1 5Z" fill="#fff" stroke="#444" stroke-width="1.1"/><circle cx="6.8" cy="4.6" r="3.2" fill="#111"/><circle cx="5.9" cy="3.4" r="0.9" fill="#fff"/></svg><div class="t" style="left:1491px;top:139.9px;font-size:14.5px;color:#2a2a2a;letter-spacing:-0.18px">Svg_base_card_gn...</div><svg class="a" style="left:1475px;top:146px" width="8" height="5"><path d="M0 0H7.5L3.75 4.5Z" fill="#222"/></svg><svg class="a" style="left:1635.5px;top:143.5px" width="14" height="10"><path d="M1 5 C3 1.2 11 1.2 13 5 C11 8.8 3 8.8 1 5Z" fill="#fff" stroke="#444" stroke-width="1.1"/><circle cx="6.8" cy="4.6" r="3.2" fill="#111"/><circle cx="5.9" cy="3.4" r="0.9" fill="#fff"/></svg><div class="t" style="left:1491px;top:205.4px;font-size:14.5px;color:#2a2a2a;letter-spacing:-0.18px">Svg_base_card_gn...</div><svg class="a" style="left:1475px;top:211.5px" width="8" height="5"><path d="M0 0H7.5L3.75 4.5Z" fill="#222"/></svg><svg class="a" style="left:1635.5px;top:209.0px" width="14" height="10"><path d="M1 5 C3 1.2 11 1.2 13 5 C11 8.8 3 8.8 1 5Z" fill="#fff" stroke="#444" stroke-width="1.1"/><circle cx="6.8" cy="4.6" r="3.2" fill="#111"/><circle cx="5.9" cy="3.4" r="0.9" fill="#fff"/></svg><div class="t" style="left:1474px;top:272.9px;font-size:14.5px;color:#2a2a2a;">Attach</div><svg class="a" style="left:1457px;top:279px" width="8" height="5"><path d="M0 0H7.5L3.75 4.5Z" fill="#222"/></svg><svg class="a" style="left:1635.5px;top:276.5px" width="14" height="10"><path d="M1 5 C3 1.2 11 1.2 13 5 C11 8.8 3 8.8 1 5Z" fill="#fff" stroke="#444" stroke-width="1.1"/><circle cx="6.8" cy="4.6" r="3.2" fill="#111"/><circle cx="5.9" cy="3.4" r="0.9" fill="#fff"/></svg><div class="t" style="left:1491px;top:299.9px;font-size:14.5px;color:#2a2a2a;letter-spacing:-0.18px">Svg_popout_gnom...</div><svg class="a" style="left:1475px;top:306px" width="8" height="5"><path d="M0 0H7.5L3.75 4.5Z" fill="#222"/></svg><svg class="a" style="left:1635.5px;top:303.5px" width="14" height="10"><path d="M1 5 C3 1.2 11 1.2 13 5 C11 8.8 3 8.8 1 5Z" fill="#fff" stroke="#444" stroke-width="1.1"/><circle cx="6.8" cy="4.6" r="3.2" fill="#111"/><circle cx="5.9" cy="3.4" r="0.9" fill="#fff"/></svg><div class="t" style="left:1491px;top:365.2px;font-size:14.5px;color:#2a2a2a;letter-spacing:-0.18px">Svg_popout_gnom...</div><svg class="a" style="left:1475px;top:371.3px" width="8" height="5"><path d="M0 0H7.5L3.75 4.5Z" fill="#222"/></svg><svg class="a" style="left:1635.5px;top:368.8px" width="14" height="10"><path d="M1 5 C3 1.2 11 1.2 13 5 C11 8.8 3 8.8 1 5Z" fill="#fff" stroke="#444" stroke-width="1.1"/><circle cx="6.8" cy="4.6" r="3.2" fill="#111"/><circle cx="5.9" cy="3.4" r="0.9" fill="#fff"/></svg><div class="t" style="left:1491px;top:430.5px;font-size:14.5px;color:#2a2a2a;letter-spacing:-0.18px">Png_printable_sky_...</div><svg class="a" style="left:1475px;top:436.6px" width="8" height="5"><path d="M0 0H7.5L3.75 4.5Z" fill="#222"/></svg><svg class="a" style="left:1635.5px;top:434.1px" width="14" height="10"><path d="M1 5 C3 1.2 11 1.2 13 5 C11 8.8 3 8.8 1 5Z" fill="#fff" stroke="#444" stroke-width="1.1"/><circle cx="6.8" cy="4.6" r="3.2" fill="#111"/><circle cx="5.9" cy="3.4" r="0.9" fill="#fff"/></svg><div class="t" style="left:1474px;top:497.9px;font-size:14.5px;color:#2a2a2a;letter-spacing:-0.18px">Png_printable_gnome...</div><svg class="a" style="left:1457px;top:504px" width="8" height="5"><path d="M0 0H7.5L3.75 4.5Z" fill="#222"/></svg><svg class="a" style="left:1635.5px;top:501.5px" width="14" height="10"><path d="M1 5 C3 1.2 11 1.2 13 5 C11 8.8 3 8.8 1 5Z" fill="#fff" stroke="#444" stroke-width="1.1"/><circle cx="6.8" cy="4.6" r="3.2" fill="#111"/><circle cx="5.9" cy="3.4" r="0.9" fill="#fff"/></svg><div class="t" style="left:1526px;top:172.2px;font-size:10.5px;color:#3a3a3a;letter-spacing:0px">Score</div><div class="t" style="left:1526px;top:238.2px;font-size:10.5px;color:#3a3a3a;letter-spacing:0px">Basic Cut</div><div class="t" style="left:1526px;top:332.9px;font-size:10.5px;color:#3a3a3a;letter-spacing:0px">Score</div><div class="t" style="left:1526px;top:398.2px;font-size:10.5px;color:#3a3a3a;letter-spacing:0px">Basic Cut</div><div class="t" style="left:1526px;top:465.2px;font-size:10.5px;color:#3a3a3a;letter-spacing:0px">Print Then Cut</div><div class="t" style="left:1508.8px;top:530.7px;font-size:10.5px;color:#3a3a3a;letter-spacing:0px">Print Then Cut</div><svg class="a" style="left:1489px;top:172px" width="28" height="10"><path d="M1 5H27" stroke="#d6d6d6" stroke-width="1" stroke-dasharray="2.5 2"/></svg><div class="a" style="left:1497px;top:230.5px;width:13px;height:25.3px;background:#7aaef6"></div><svg class="a" style="left:1490px;top:323px" width="28" height="28" opacity="0.5"><path d="M3 10H8M11 10H16M19 10H24M3 16H8M11 16H16M19 16H24M3 22H6M10 22H13M18 22H24M13 4V25" stroke="#ccc" stroke-width="1"/></svg><svg class="a" style="left:1490px;top:390px" width="28" height="28" opacity="0.6"><path d="M9 4V24M12 3V25M15 4V24M4 24H8M18 24H24" stroke="#c6c6c6" stroke-width="0.9"/></svg><div class="a" style="left:1497px;top:456px;width:13px;height:26px;background:linear-gradient(#5fb8e6 0%,#bfe3f6 25%,#fff 55%,#fff 100%);border:0.5px solid #eee"></div><svg class="a" style="left:1476px;top:524px" width="20" height="25"><rect x="1" y="3" width="10" height="8" fill="#7cc36e"/><circle cx="4" cy="6" r="1.5" fill="#e86a8a"/><circle cx="8" cy="5" r="1.2" fill="#f5c842"/><path d="M13 1 L15 1 L16 6 L12 6Z" fill="#78a9de"/><circle cx="5" cy="17" r="3" fill="#8a5a2b"/><path d="M2 13L5 10L8 13Z" fill="#9bd24a"/><ellipse cx="12" cy="16" rx="3.5" ry="1.3" fill="#5c9e3a"/><ellipse cx="6" cy="22" rx="3.5" ry="1.3" fill="#5c9e3a"/><rect x="13" y="18" width="6" height="5" fill="#6fbf58"/></svg><div class="a" style="left:1449px;top:815px;width:212px;height:1px;background:#e6e6e6"></div><div class="a" style="left:1457px;top:822.5px;width:47px;height:31px;border:1px solid #888;border-radius:2px;background:#fff"></div><div class="t" style="left:1512.5px;top:833px;font-size:9.5px;color:#444;letter-spacing:-0.2px">Blank Canvas</div><div class="a" style="left:1449px;top:859.5px;width:225px;height:40.5px;background:#dcdcdc"></div><div class="t" style="left:1460.5px;top:886px;font-size:9.5px;color:#c2c2c2;letter-spacing:-0.2px">Slice</div><div class="t" style="left:1497.5px;top:886px;font-size:9.5px;color:#c2c2c2;letter-spacing:-0.2px">Weld</div><div class="t" style="left:1536.5px;top:886px;font-size:9.5px;color:#333;letter-spacing:-0.2px">Detach</div><div class="t" style="left:1585.5px;top:886px;font-size:9.5px;color:#c2c2c2;letter-spacing:-0.2px">Flatten</div><div class="t" style="left:1632.5px;top:886px;font-size:9.5px;color:#c2c2c2;letter-spacing:-0.2px">Contour</div><svg class="a" style="left:1459px;top:865px" width="18" height="16"><path d="M2 2H10V7M2 2V11H7" fill="none" stroke="#c4c4c4" stroke-width="1"/><circle cx="11" cy="10" r="4.5" fill="none" stroke="#c4c4c4" stroke-width="1"/><circle cx="11" cy="10" r="2" fill="none" stroke="#c4c4c4" stroke-width="1"/></svg><svg class="a" style="left:1498px;top:865px" width="18" height="16"><path d="M2 2H8V6H10 A5 5 0 1 1 6 12 V9 H2Z" fill="none" stroke="#c4c4c4" stroke-width="1"/></svg><svg class="a" style="left:1543px;top:865px" width="17" height="17"><path d="M6 1.5 A3.2 3.2 0 0 0 2 5.5 L5 8.5 M8 5 L5.5 2.5 M9 9 L12 12 M11 15.5 A3.2 3.2 0 0 0 15 11.5 L12 8.5" fill="none" stroke="#333" stroke-width="1.3"/><path d="M6 7L10 11" stroke="#333" stroke-width="1.3"/></svg><svg class="a" style="left:1590px;top:865px" width="18" height="16"><path d="M9 1V9M6 6L9 9L12 6M2 9L9 13L16 9M2 12L9 16L16 12" fill="none" stroke="#c4c4c4" stroke-width="1"/></svg><svg class="a" style="left:1641px;top:866px" width="16" height="16"><rect x="1" y="1" width="14" height="14" fill="none" stroke="#c4c4c4" stroke-width="1"/><path d="M4 5V4H5M11 4H12V5M12 11V12H11M5 12H4V11" fill="none" stroke="#c4c4c4" stroke-width="1"/></svg></body></html>
